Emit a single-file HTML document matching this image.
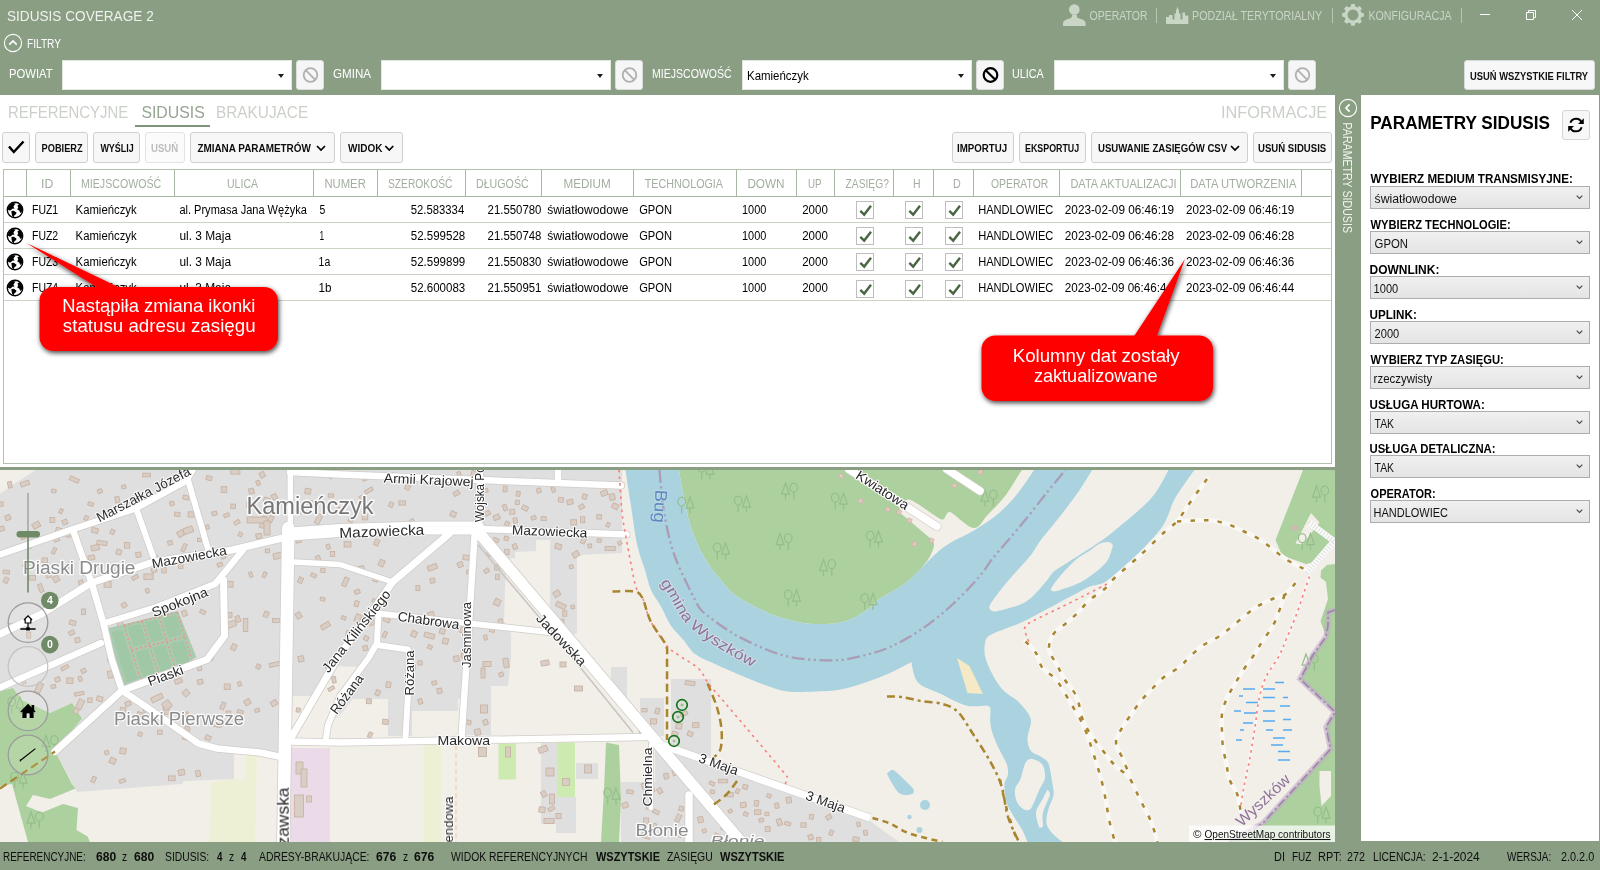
<!DOCTYPE html>
<html lang="pl">
<head>
<meta charset="utf-8">
<title>SIDUSIS COVERAGE 2</title>
<style>
*{box-sizing:border-box;margin:0;padding:0}
html,body{width:1600px;height:870px;overflow:hidden;background:#fff}
body{font-family:"Liberation Sans",sans-serif;font-size:12px;color:#000;position:relative}
.abs{position:absolute}
.t{position:absolute;white-space:nowrap;line-height:1;transform-origin:0 50%}
.g{background:#8a9e84}
.combo{position:absolute;top:60px;height:30px;width:230px;background:#fff;border:1px solid #e3e8e1}
.combo i{position:absolute;right:7.5px;top:12.6px;width:0;height:0;border-left:3.7px solid transparent;border-right:3.7px solid transparent;border-top:4.3px solid #1e1e1e}
.fbtn{position:absolute;top:60px;height:30px;width:28px;background:#f6f6f6;border:1px solid #dcdcdc;border-radius:3px}
.btn{position:absolute;top:132px;height:31px;background:#f7f7f7;border:1px solid #cfcfcf;border-radius:3px}
.sel{position:absolute;left:1370px;width:220px;height:23px;border:1px solid #adadad;background:linear-gradient(#f0f0f0,#e4e4e4)}
.sel svg{position:absolute;right:6px;top:8px}
.hl{position:absolute;left:4px;width:1327px;height:1px;background:#c9d3c6}
.vl{position:absolute;top:170px;width:1px;height:26px;background:#a9b8a4}
.cb{position:absolute;width:18px;height:18px;border:1px solid #bdbdbd;background:#fff}
.cb svg{position:absolute;left:2px;top:3px}
</style>
</head>
<body>
<!-- green frame -->
<div class="abs g" style="left:0;top:0;width:1600px;height:95px"></div>
<div class="abs g" style="left:0;top:841px;width:1600px;height:29px"></div>
<div class="abs g" style="left:1335px;top:95px;width:26px;height:747px"></div>
<div class="abs g" style="left:0;top:467px;width:1335px;height:4px"></div>
<div class="abs g" style="left:1599px;top:95px;width:1px;height:747px"></div>

<!-- title bar icons -->
<svg class="abs" style="left:1060px;top:0" width="540" height="32" viewBox="1060 0 540 32">
<g fill="#c9d5c5">
<circle cx="1074.3" cy="9.6" r="5.3"/>
<path d="M1063,26 V23.5 Q1063,20.5 1066.5,19.5 L1071,18 Q1072,17.5 1072,15 H1076.8 Q1076.8,17.5 1077.8,18 L1082.2,19.5 Q1085.6,20.5 1085.6,23.5 V26 Z"/>
<path d="M1166,24 V17 H1169 V15 H1172.5 V19.5 H1174.5 V13.5 H1176 V11 L1177.5,6.5 L1179,11 V13.5 H1180.5 V19.5 H1182.5 V12.5 H1185 V15.5 H1188.3 V24 Z"/>
<path fill-rule="evenodd" d="M1351.3,4 h3.4 l.6,2.6 1.9,.8 2.3,-1.4 2.4,2.4 -1.4,2.3 .8,1.9 2.6,.6 v3.4 l-2.6,.6 -.8,1.9 1.4,2.3 -2.4,2.4 -2.3,-1.4 -1.9,.8 -.6,2.6 h-3.4 l-.6,-2.6 -1.9,-.8 -2.3,1.4 -2.4,-2.4 1.4,-2.3 -.8,-1.9 -2.6,-.6 v-3.4 l2.6,-.6 .8,-1.9 -1.4,-2.3 2.4,-2.4 2.3,1.4 1.9,-.8 z M1353,9.6 a5.4,5.4 0 1 0 .01,0 z"/>
</g>
<g stroke="#b7c5b2" stroke-width="1"><path d="M1156.5,8 V23 M1332.5,8 V23 M1461.5,8 V23"/></g>
<g fill="none" stroke="#fff" stroke-width="1">
<path d="M1480,14.5 H1490"/>
<path d="M1526.5,12.5 H1533.5 V19.5 H1526.5 Z M1528.5,12.5 V10.5 H1535.5 V17.5 H1533.5"/>
<path d="M1572,10 L1582,20 M1582,10 L1572,20"/>
</g>
</svg>

<!-- FILTRY expander icon -->
<svg class="abs" style="left:3px;top:33px" width="20" height="20" viewBox="0 0 20 20"><circle cx="10" cy="10" r="8.6" fill="none" stroke="#fff" stroke-width="1.1"/><path d="M6.3,11.6 L10,8 L13.7,11.6" fill="none" stroke="#fff" stroke-width="1.7"/></svg>

<!-- filter combos -->
<div class="combo" style="left:62px"><i></i></div>
<div class="combo" style="left:381px"><i></i></div>
<div class="combo" style="left:742px"><i></i></div>
<div class="combo" style="left:1054px"><i></i></div>
<div class="fbtn" style="left:296px"><svg width="26" height="28"><circle cx="13.5" cy="14" r="6.8" fill="none" stroke="#b0b0b0" stroke-width="1.8"/><path d="M8.7,9.2 L18.3,18.8" stroke="#b0b0b0" stroke-width="1.8"/></svg></div>
<div class="fbtn" style="left:615px"><svg width="26" height="28"><circle cx="13.5" cy="14" r="6.8" fill="none" stroke="#b0b0b0" stroke-width="1.8"/><path d="M8.7,9.2 L18.3,18.8" stroke="#b0b0b0" stroke-width="1.8"/></svg></div>
<div class="fbtn" style="left:976px"><svg width="26" height="28"><circle cx="13.5" cy="14" r="6.8" fill="none" stroke="#000" stroke-width="2.2"/><path d="M8.7,9.2 L18.3,18.8" stroke="#000" stroke-width="2.2"/></svg></div>
<div class="fbtn" style="left:1288px"><svg width="26" height="28"><circle cx="13.5" cy="14" r="6.8" fill="none" stroke="#b0b0b0" stroke-width="1.8"/><path d="M8.7,9.2 L18.3,18.8" stroke="#b0b0b0" stroke-width="1.8"/></svg></div>
<div class="abs" style="left:1464px;top:60px;width:131px;height:30px;background:#f7f7f7;border:1px solid #d9d9d9;border-radius:3px"></div>

<!-- tab underline -->
<div class="abs" style="left:135px;top:125px;width:75px;height:2px;background:#7f9679"></div>

<!-- toolbar buttons -->
<div class="btn" style="left:2px;width:28px"><svg width="26" height="29"><path d="M6,13.5 L10.8,19 L20.5,8.5" fill="none" stroke="#000" stroke-width="2.5"/></svg></div>
<div class="btn" style="left:35px;width:53px"></div>
<div class="btn" style="left:93px;width:47px"></div>
<div class="btn" style="left:145px;width:40px;background:#fbfbfb;border-color:#e3e3e3"></div>
<div class="btn" style="left:190px;width:145px"></div>
<div class="btn" style="left:340px;width:63px"></div>
<div class="btn" style="left:952px;width:62px"></div>
<div class="btn" style="left:1019px;width:67px"></div>
<div class="btn" style="left:1091px;width:157px"></div>
<div class="btn" style="left:1253px;width:79px"></div>
<svg class="abs" style="left:0;top:140px" width="1335" height="16"><g fill="none" stroke="#000" stroke-width="1.7"><path d="M317,6 L321,10 L325,6"/><path d="M385.3,6 L389.3,10 L393.3,6"/><path d="M1231,6 L1235,10 L1239,6"/></g></svg>

<!-- grid -->
<div class="abs" style="left:3px;top:169px;width:1329px;height:295px;border:1px solid #b4c1b0;background:#fff"></div>
<div class="hl" style="top:196px;background:#a9b8a4"></div>
<div class="hl" style="top:222px"></div><div class="hl" style="top:248px"></div><div class="hl" style="top:274px"></div><div class="hl" style="top:300px"></div>
<div class="vl" style="left:25.9px"></div><div class="vl" style="left:69.9px"></div><div class="vl" style="left:173.9px"></div><div class="vl" style="left:313.0px"></div><div class="vl" style="left:376.9px"></div><div class="vl" style="left:465.2px"></div><div class="vl" style="left:541.0px"></div><div class="vl" style="left:633.0px"></div><div class="vl" style="left:735.8px"></div><div class="vl" style="left:795.8px"></div><div class="vl" style="left:834.3px"></div><div class="vl" style="left:893.0px"></div><div class="vl" style="left:932.8px"></div><div class="vl" style="left:972.8px"></div><div class="vl" style="left:1059.1px"></div><div class="vl" style="left:1179.9px"></div><div class="vl" style="left:1301.1px"></div>
<svg class="abs" style="left:6.4px;top:200.9px" width="18" height="18" viewBox="-9 -9 18 18"><circle r="7.7" fill="#fff" stroke="#000" stroke-width="1.4"/><path d="M-6.6,-3.4 L-4.6,-5.8 L-2.2,-7 L0.8,-6.6 L-0.6,-5 L-1.6,-3.2 L-0.4,-1.6 L-2.8,-1.2 L-4,0.2 L-5.6,0.6 L-7.2,-0.6 Z M-3.6,1 L-1.2,0.8 L1.4,2.4 L1.2,4 L-0.6,5.2 L-1.2,7.2 L-2.8,6 L-3.4,3.6 Z M2.4,-4.6 L4.6,-6 L6.6,-3.4 L7.4,0 L6.4,2.6 L5.2,2.8 L4.2,0.6 L2.2,-0.6 L3.2,-2.6 Z" fill="#000"/></svg><div class="cb" style="left:856.2px;top:201.2px"><svg width="14" height="12"><path d="M1.3,5.8 L5.2,9.6 L12,0.8" fill="none" stroke="#4b6644" stroke-width="2.4"/></svg></div><div class="cb" style="left:905.2px;top:201.2px"><svg width="14" height="12"><path d="M1.3,5.8 L5.2,9.6 L12,0.8" fill="none" stroke="#4b6644" stroke-width="2.4"/></svg></div><div class="cb" style="left:945.2px;top:201.2px"><svg width="14" height="12"><path d="M1.3,5.8 L5.2,9.6 L12,0.8" fill="none" stroke="#4b6644" stroke-width="2.4"/></svg></div><svg class="abs" style="left:6.4px;top:227.0px" width="18" height="18" viewBox="-9 -9 18 18"><circle r="7.7" fill="#fff" stroke="#000" stroke-width="1.4"/><path d="M-6.6,-3.4 L-4.6,-5.8 L-2.2,-7 L0.8,-6.6 L-0.6,-5 L-1.6,-3.2 L-0.4,-1.6 L-2.8,-1.2 L-4,0.2 L-5.6,0.6 L-7.2,-0.6 Z M-3.6,1 L-1.2,0.8 L1.4,2.4 L1.2,4 L-0.6,5.2 L-1.2,7.2 L-2.8,6 L-3.4,3.6 Z M2.4,-4.6 L4.6,-6 L6.6,-3.4 L7.4,0 L6.4,2.6 L5.2,2.8 L4.2,0.6 L2.2,-0.6 L3.2,-2.6 Z" fill="#000"/></svg><div class="cb" style="left:856.2px;top:227.3px"><svg width="14" height="12"><path d="M1.3,5.8 L5.2,9.6 L12,0.8" fill="none" stroke="#4b6644" stroke-width="2.4"/></svg></div><div class="cb" style="left:905.2px;top:227.3px"><svg width="14" height="12"><path d="M1.3,5.8 L5.2,9.6 L12,0.8" fill="none" stroke="#4b6644" stroke-width="2.4"/></svg></div><div class="cb" style="left:945.2px;top:227.3px"><svg width="14" height="12"><path d="M1.3,5.8 L5.2,9.6 L12,0.8" fill="none" stroke="#4b6644" stroke-width="2.4"/></svg></div><svg class="abs" style="left:6.4px;top:253.1px" width="18" height="18" viewBox="-9 -9 18 18"><circle r="7.7" fill="#fff" stroke="#000" stroke-width="1.4"/><path d="M-6.6,-3.4 L-4.6,-5.8 L-2.2,-7 L0.8,-6.6 L-0.6,-5 L-1.6,-3.2 L-0.4,-1.6 L-2.8,-1.2 L-4,0.2 L-5.6,0.6 L-7.2,-0.6 Z M-3.6,1 L-1.2,0.8 L1.4,2.4 L1.2,4 L-0.6,5.2 L-1.2,7.2 L-2.8,6 L-3.4,3.6 Z M2.4,-4.6 L4.6,-6 L6.6,-3.4 L7.4,0 L6.4,2.6 L5.2,2.8 L4.2,0.6 L2.2,-0.6 L3.2,-2.6 Z" fill="#000"/></svg><div class="cb" style="left:856.2px;top:253.4px"><svg width="14" height="12"><path d="M1.3,5.8 L5.2,9.6 L12,0.8" fill="none" stroke="#4b6644" stroke-width="2.4"/></svg></div><div class="cb" style="left:905.2px;top:253.4px"><svg width="14" height="12"><path d="M1.3,5.8 L5.2,9.6 L12,0.8" fill="none" stroke="#4b6644" stroke-width="2.4"/></svg></div><div class="cb" style="left:945.2px;top:253.4px"><svg width="14" height="12"><path d="M1.3,5.8 L5.2,9.6 L12,0.8" fill="none" stroke="#4b6644" stroke-width="2.4"/></svg></div><svg class="abs" style="left:6.4px;top:279.2px" width="18" height="18" viewBox="-9 -9 18 18"><circle r="7.7" fill="#fff" stroke="#000" stroke-width="1.4"/><path d="M-6.6,-3.4 L-4.6,-5.8 L-2.2,-7 L0.8,-6.6 L-0.6,-5 L-1.6,-3.2 L-0.4,-1.6 L-2.8,-1.2 L-4,0.2 L-5.6,0.6 L-7.2,-0.6 Z M-3.6,1 L-1.2,0.8 L1.4,2.4 L1.2,4 L-0.6,5.2 L-1.2,7.2 L-2.8,6 L-3.4,3.6 Z M2.4,-4.6 L4.6,-6 L6.6,-3.4 L7.4,0 L6.4,2.6 L5.2,2.8 L4.2,0.6 L2.2,-0.6 L3.2,-2.6 Z" fill="#000"/></svg><div class="cb" style="left:856.2px;top:279.5px"><svg width="14" height="12"><path d="M1.3,5.8 L5.2,9.6 L12,0.8" fill="none" stroke="#4b6644" stroke-width="2.4"/></svg></div><div class="cb" style="left:905.2px;top:279.5px"><svg width="14" height="12"><path d="M1.3,5.8 L5.2,9.6 L12,0.8" fill="none" stroke="#4b6644" stroke-width="2.4"/></svg></div><div class="cb" style="left:945.2px;top:279.5px"><svg width="14" height="12"><path d="M1.3,5.8 L5.2,9.6 L12,0.8" fill="none" stroke="#4b6644" stroke-width="2.4"/></svg></div>

<!-- right panel -->
<svg class="abs" style="left:1338px;top:98px" width="20" height="20" viewBox="0 0 20 20"><circle cx="10" cy="10" r="8.6" fill="none" stroke="#fff" stroke-width="1.1"/><path d="M11.6,6.3 L8,10 L11.6,13.7" fill="none" stroke="#fff" stroke-width="1.7"/></svg>
<div class="abs" style="left:1562px;top:110px;width:28px;height:30px;background:#f7f7f7;border:1px solid #d5d5d5;border-radius:3px"></div>
<svg class="abs" style="left:1567px;top:116px" width="18" height="18" viewBox="0 0 18 18"><g fill="none" stroke="#000" stroke-width="2"><path d="M14.6,6.2 A6,6 0 0 0 3.4,6.8"/><path d="M3.4,11.8 A6,6 0 0 0 14.6,11.2"/></g><path d="M16.8,2.2 V8 H11 Z M1.2,15.8 V10 H7 Z" fill="#000"/></svg>
<div class="sel" style="top:186.0px"><svg width="7" height="5"><path d="M.7,.7 L3.5,3.5 L6.3,.7" fill="none" stroke="#444" stroke-width="1.1"/></svg></div><div class="sel" style="top:231.0px"><svg width="7" height="5"><path d="M.7,.7 L3.5,3.5 L6.3,.7" fill="none" stroke="#444" stroke-width="1.1"/></svg></div><div class="sel" style="top:276.0px"><svg width="7" height="5"><path d="M.7,.7 L3.5,3.5 L6.3,.7" fill="none" stroke="#444" stroke-width="1.1"/></svg></div><div class="sel" style="top:321.0px"><svg width="7" height="5"><path d="M.7,.7 L3.5,3.5 L6.3,.7" fill="none" stroke="#444" stroke-width="1.1"/></svg></div><div class="sel" style="top:366.0px"><svg width="7" height="5"><path d="M.7,.7 L3.5,3.5 L6.3,.7" fill="none" stroke="#444" stroke-width="1.1"/></svg></div><div class="sel" style="top:411.0px"><svg width="7" height="5"><path d="M.7,.7 L3.5,3.5 L6.3,.7" fill="none" stroke="#444" stroke-width="1.1"/></svg></div><div class="sel" style="top:455.0px"><svg width="7" height="5"><path d="M.7,.7 L3.5,3.5 L6.3,.7" fill="none" stroke="#444" stroke-width="1.1"/></svg></div><div class="sel" style="top:500.0px"><svg width="7" height="5"><path d="M.7,.7 L3.5,3.5 L6.3,.7" fill="none" stroke="#444" stroke-width="1.1"/></svg></div>

<svg class="abs" style="left:0;top:470px" width="1335" height="372" viewBox="0 470 1335 372" font-family="Liberation Sans, sans-serif">
<defs><filter id="mb" x="-10" y="460" width="1355" height="392" filterUnits="userSpaceOnUse"><feGaussianBlur stdDeviation="0.45"/></filter></defs>
<g filter="url(#mb)">
<rect x="-10" y="460" width="1355" height="392" fill="#f2efe9"/>
<!-- residential grey -->
<g fill="#e0dfdf">
<path d="M36,470 L622,470 L622,553 L577,555 L577,634 L550,634 L550,540 L536,540 L536,551 L515,552 L515,558 L506,559 L504,621 L511,634 L511,658 L508,686 L491,686 L491,735 L466,735 L466,699 L458,699 L458,711 L412,711 L412,736 L388,736 L388,699 L353,699 L340,715 L300,742 L291,742 L291,757 L247,751 L234,752 L234,779 L184,781 L182,784 L77,792 L75,788 L55,751 L82,718 L72,703 L50,713 L22,700 L13,688 L0,691 L0,494 L14,484 Z"/>
<rect x="611" y="667" width="16" height="32"/>
<rect x="640" y="698" width="24" height="38"/>
<rect x="671" y="679" width="40" height="77"/>
<rect x="541" y="743" width="16" height="81"/>
<rect x="556" y="797" width="20" height="36"/>
<rect x="576" y="763" width="22" height="16"/>
<path d="M621,782 L655,782 L655,745 L680,752 L870,821 L899,842 L621,842 Z"/>
</g>
<path d="M333,666 L362,667 L340,696.5 L328,725 L326,738 L291,738 L291,696 L315,696 Z" fill="#f2efe9"/>
<!-- farmland / industrial / garden -->
<path d="M211,782 L234,779.5 L246,779.5 L246,753.5 L257,755 L255,842 L210,842 Z" fill="#eef0d5"/>
<rect x="424" y="745" width="17" height="97" fill="#eef0d5"/>
<rect x="290.5" y="748" width="39.5" height="94" fill="#ebdbe8"/>
<rect x="498.5" y="743.5" width="17.5" height="36" fill="#cdebb0"/>
<rect x="557" y="742.5" width="18" height="54.5" fill="#cdebb0"/>
<!-- forests -->
<g fill="#add19e">
<path d="M0,691 L13,688 L22,700 L50,713 L72,703 L82,718.5 L55,751 L72,784 L75.5,788.5 L50,799 L33,795 L26,806 L42,812.5 L63,804 L78,808 L76.5,830 L87.5,836.5 L90,842 L28,842 L12,784 L0,786 Z"/>
<path d="M679.0,470.0 L1021.5,470.0 C1021.5,470.0 1011.1,488.1 1005.5,495.5 C999.9,502.9 993.3,509.1 988.0,514.5 C982.7,519.9 979.8,528.4 973.5,528.0 C967.2,527.6 954.4,513.2 950.0,512.0 C945.6,510.8 945.8,520.8 941.5,519.5 C937.2,518.2 915.3,500.6 909.0,499.5 C902.7,498.4 899.0,512.0 899.0,512.0 C899.0,512.0 927.5,535.6 930.0,538.0 C932.5,540.4 934.4,542.1 934.0,545.5 C933.6,548.9 931.1,555.2 927.5,560.5 C923.9,565.8 916.0,573.5 912.5,577.0 C909.0,580.5 907.1,582.2 903.0,585.0 C898.9,587.8 881.0,597.9 878.0,600.0 C875.0,602.1 874.4,604.3 871.5,606.5 C868.6,608.7 861.7,613.8 856.5,616.5 C851.3,619.2 846.3,621.2 840.5,622.5 C834.7,623.8 827.8,623.9 821.5,624.0 C815.2,624.1 810.3,624.2 803.0,623.0 C795.7,621.8 784.7,618.8 777.5,616.5 C770.3,614.2 765.8,611.8 760.0,609.0 C754.2,606.2 747.5,603.1 742.5,600.0 C737.5,596.9 734.3,595.1 730.0,590.5 C725.7,585.9 714.7,573.5 708.5,564.0 C702.3,554.5 697.0,544.0 693.0,533.5 C689.0,523.0 686.8,511.6 684.5,501.0 C682.2,490.4 679.0,470.0 679.0,470.0 Z"/>
<path d="M1000,470 L1022,470 L1000,498.5 Z"/>
<path d="M1303,470 L1335,470 L1335,542 L1315,562 L1306,564 L1282,555.5 L1275.5,540 Z"/>
<path d="M1321,570.5 L1327,565 L1335,564 L1335,842 L1229.5,842 L1262.5,823.5 L1330,749 L1326,727 L1335,712 L1300,679 L1313,655 L1326,636.5 L1320.5,621 L1328,599 L1326,582 L1320.5,577.5 Z"/>
<path d="M606,742.5 L619,745 L621,800 L619,842 L601,842 L604,790 Z"/>
</g>
<path d="M1311,513 L1295.5,543.5 L1302.5,544.5 L1319.5,522.5 Z" fill="#f2efe9"/>
<path d="M1319.5,771 L1331,771 L1331,796 L1321.5,806 L1319.5,786 Z" fill="#f2efe9"/>
<!-- water -->
<g fill="#aad3df">
<path d="M625.5,470.0 C625.5,470.0 628.6,490.2 630.5,502.5 C632.4,514.8 634.6,532.7 637.0,544.0 C639.4,555.3 643.3,564.1 645.5,571.5 C647.7,578.9 648.4,584.2 651.0,590.0 C653.6,595.8 657.8,600.7 661.0,606.5 C664.2,612.3 666.8,619.5 670.5,625.0 C674.2,630.5 678.9,634.7 683.0,639.5 C687.1,644.3 689.7,649.9 695.0,654.0 C700.3,658.1 707.5,660.5 715.0,664.0 C722.5,667.5 731.7,671.5 740.0,675.0 C748.3,678.5 757.1,682.2 765.0,685.0 C772.9,687.8 779.1,690.4 787.5,691.5 C795.9,692.6 806.7,691.8 815.5,691.5 C824.3,691.2 832.2,691.0 840.5,689.5 C848.8,688.0 857.2,685.2 865.5,682.5 C873.8,679.8 882.3,676.4 890.0,673.0 C897.7,669.6 911.5,662.0 911.5,662.0 C911.5,662.0 913.2,677.2 918.0,682.5 C922.8,687.8 932.0,689.7 940.0,693.5 C948.0,697.3 958.2,703.5 966.0,705.5 C973.8,707.5 985.0,705.2 987.0,705.5 C989.0,705.8 990.2,707.1 990.5,709.0 C990.8,710.9 989.6,719.4 990.5,725.0 C991.4,730.6 993.3,736.1 996.0,742.5 C998.7,748.9 1005.0,759.5 1006.5,763.5 C1008.0,767.5 1008.3,770.5 1008.0,774.0 C1007.7,777.5 1004.7,780.1 1004.5,784.5 C1004.3,788.9 1005.0,796.8 1006.5,802.0 C1008.0,807.2 1010.9,811.4 1013.5,816.0 C1016.1,820.6 1019.7,825.2 1022.0,829.5 C1024.3,833.8 1027.5,842.0 1027.5,842.0 L1062.5,842.0 C1062.5,842.0 1054.7,836.2 1052.0,833.0 C1049.3,829.8 1047.1,827.0 1046.5,823.0 C1045.9,819.0 1047.3,813.7 1048.5,809.0 C1049.7,804.3 1052.9,799.7 1053.5,795.0 C1054.1,790.3 1052.8,786.2 1052.0,781.0 C1051.2,775.8 1050.0,767.0 1048.5,763.5 C1047.0,760.0 1044.4,759.1 1041.5,757.0 C1038.6,754.9 1033.3,754.0 1031.0,751.0 C1028.7,748.0 1027.5,743.9 1027.5,739.0 C1027.5,734.1 1031.0,725.4 1031.0,721.5 C1031.0,717.6 1029.6,715.7 1027.5,712.5 C1025.4,709.3 1021.1,704.2 1017.0,700.5 C1012.9,696.8 1007.1,694.3 1003.0,690.0 C998.9,685.7 995.5,680.2 992.5,674.5 C989.5,668.8 986.1,661.8 985.0,656.0 C983.9,650.2 984.4,643.3 986.0,639.5 C987.6,635.7 990.6,634.9 994.5,633.0 C998.4,631.1 1013.5,626.4 1025.5,620.5 C1037.5,614.6 1080.9,590.7 1087.5,587.5 C1094.1,584.3 1098.8,585.9 1105.0,582.0 C1111.2,578.1 1122.0,569.2 1131.5,560.0 C1141.0,550.8 1154.8,537.2 1162.0,527.0 C1169.2,516.8 1169.6,508.0 1175.0,498.5 C1180.4,489.0 1194.5,470.0 1194.5,470.0 L1168.5,470.0 C1168.5,470.0 1159.9,488.5 1151.0,498.5 C1142.1,508.5 1121.1,525.2 1113.5,531.5 C1105.9,537.8 1101.7,540.5 1093.5,546.0 C1085.3,551.5 1058.8,567.8 1054.5,571.0 C1050.2,574.2 1049.7,577.6 1046.0,581.5 C1042.3,585.4 1034.1,597.0 1025.5,602.0 C1016.9,607.0 997.5,611.2 994.5,611.5 C991.5,611.8 988.6,608.8 989.5,606.0 C990.4,603.2 999.2,591.9 1002.5,587.5 C1005.8,583.1 1007.9,581.2 1011.5,577.0 C1015.1,572.8 1026.0,561.1 1030.5,555.5 C1035.0,549.9 1036.2,546.3 1040.5,540.5 C1044.8,534.7 1054.9,523.0 1061.5,514.5 C1068.1,506.0 1074.9,496.9 1080.0,489.5 C1085.1,482.1 1092.0,470.0 1092.0,470.0 L1034.0,470.0 C1034.0,470.0 1023.8,485.8 1018.0,493.0 C1012.2,500.2 1006.3,506.8 999.0,513.0 C991.7,519.2 982.2,525.5 974.0,530.5 C965.8,535.5 956.4,539.0 950.0,543.0 C943.6,547.0 940.6,549.4 935.0,554.5 C929.4,559.6 916.1,573.6 912.5,577.0 C908.9,580.4 907.1,582.2 903.0,585.0 C898.9,587.8 881.0,597.9 878.0,600.0 C875.0,602.1 874.4,604.3 871.5,606.5 C868.6,608.7 861.7,613.8 856.5,616.5 C851.3,619.2 846.3,621.2 840.5,622.5 C834.7,623.8 827.8,623.9 821.5,624.0 C815.2,624.1 810.3,624.2 803.0,623.0 C795.7,621.8 784.7,618.8 777.5,616.5 C770.3,614.2 765.8,611.8 760.0,609.0 C754.2,606.2 747.5,603.1 742.5,600.0 C737.5,596.9 734.3,595.1 730.0,590.5 C725.7,585.9 714.7,573.5 708.5,564.0 C702.3,554.5 697.0,544.0 693.0,533.5 C689.0,523.0 686.8,511.6 684.5,501.0 C682.2,490.4 679.0,470.0 679.0,470.0 L625.5,470.0 Z"/>
<path d="M887.0,774.0 C887.0,774.0 890.8,768.5 893.5,770.0 C896.2,771.5 911.6,786.7 913.0,788.5 C914.4,790.3 914.1,793.3 912.0,794.0 C909.9,794.7 903.1,796.3 899.0,793.0 C894.9,789.7 887.0,774.0 887.0,774.0 Z"/>
<circle cx="925" cy="805" r="5"/><circle cx="909.5" cy="817" r="2.2"/><circle cx="919.5" cy="830" r="3"/>
</g>
<path d="M1050.5,589.5 C1050.5,589.5 1054.9,582.3 1058.5,578.0 C1062.1,573.7 1069.8,565.1 1075.0,560.5 C1080.2,555.9 1086.3,553.0 1090.0,550.5 C1093.7,548.0 1096.1,545.4 1099.0,544.0 C1101.9,542.6 1105.3,541.9 1107.5,542.0 C1109.7,542.1 1111.8,543.1 1112.5,544.5 C1113.2,545.9 1112.2,548.2 1111.5,550.5 C1110.8,552.8 1109.4,557.5 1107.5,560.5 C1105.6,563.5 1103.1,565.8 1100.0,568.5 C1096.9,571.2 1092.5,574.6 1089.0,577.0 C1085.5,579.4 1082.8,581.2 1079.0,583.0 C1075.2,584.8 1070.1,586.6 1066.0,588.0 C1061.9,589.4 1056.3,591.3 1054.5,591.5 C1052.7,591.7 1050.5,589.5 1050.5,589.5 Z" fill="#f2efe9"/>
<path d="M1027.5,760.0 C1031.0,757.4 1038.6,760.6 1041.5,763.5 C1044.4,766.4 1045.3,773.2 1045.0,777.5 C1044.7,781.8 1041.7,784.7 1039.5,789.5 C1037.3,794.3 1032.7,806.3 1031.0,808.5 C1029.3,810.7 1026.3,810.6 1024.0,809.5 C1021.7,808.4 1018.5,805.3 1017.0,802.0 C1015.5,798.7 1014.4,793.3 1015.0,789.5 C1015.6,785.7 1018.7,783.4 1020.5,779.0 C1022.3,774.6 1024.0,762.6 1027.5,760.0 Z" fill="#f2efe9"/>
<path d="M1047.5,789.5 C1047.5,789.5 1050.5,792.6 1050.0,795.0 C1049.5,797.4 1044.2,807.3 1043.0,812.5 C1041.8,817.7 1043.4,824.4 1043.0,826.0 C1042.6,827.6 1039.5,828.0 1039.5,828.0 C1039.5,828.0 1035.4,817.4 1036.0,812.5 C1036.6,807.6 1041.2,802.1 1043.0,798.5 C1044.8,794.9 1047.5,789.5 1047.5,789.5 Z" fill="#f2efe9"/>
<path d="M957,658 L969.5,666 L983,694 L967.5,693 Z" fill="#f5e9c6"/>
<g fill="#d9cec5" stroke="#c9b4a5" stroke-width=".9">
<rect x="-2.7" y="-1.7" width="5.5" height="3.4" transform="translate(90.7,504.0) rotate(15)"/>
<rect x="-2.1" y="-1.7" width="4.1" height="3.4" transform="translate(163.2,670.2) rotate(0)"/>
<rect x="-3.0" y="-1.8" width="6.0" height="3.5" transform="translate(25.4,564.0) rotate(-65)"/>
<rect x="-2.6" y="-1.7" width="5.3" height="3.3" transform="translate(163.2,484.5) rotate(70)"/>
<rect x="-2.0" y="-1.8" width="3.9" height="3.5" transform="translate(240.4,534.4) rotate(-65)"/>
<rect x="-2.7" y="-2.1" width="5.4" height="4.2" transform="translate(50.6,598.4) rotate(-12)"/>
<rect x="-2.5" y="-2.3" width="5.0" height="4.7" transform="translate(158.0,606.6) rotate(-30)"/>
<rect x="-2.2" y="-2.7" width="4.4" height="5.4" transform="translate(164.0,570.2) rotate(0)"/>
<rect x="-2.5" y="-2.1" width="5.0" height="4.2" transform="translate(22.9,536.8) rotate(80)"/>
<rect x="-2.4" y="-2.7" width="4.8" height="5.3" transform="translate(274.4,496.9) rotate(-30)"/>
<rect x="-1.9" y="-2.4" width="3.7" height="4.8" transform="translate(118.1,681.7) rotate(15)"/>
<rect x="-4.0" y="-2.7" width="8.0" height="5.4" transform="translate(95.2,547.7) rotate(-12)"/>
<rect x="-2.7" y="-1.7" width="5.5" height="3.4" transform="translate(264.5,574.8) rotate(-65)"/>
<rect x="-2.4" y="-2.6" width="4.8" height="5.2" transform="translate(161.8,620.2) rotate(15)"/>
<rect x="-3.2" y="-1.8" width="6.4" height="3.5" transform="translate(6.3,572.1) rotate(8)"/>
<rect x="-3.7" y="-2.8" width="7.5" height="5.6" transform="translate(36.2,525.2) rotate(-30)"/>
<rect x="-2.0" y="-2.2" width="3.9" height="4.4" transform="translate(112.5,531.8) rotate(25)"/>
<rect x="-3.7" y="-1.9" width="7.4" height="3.8" transform="translate(276.2,620.5) rotate(0)"/>
<rect x="-2.5" y="-2.4" width="5.0" height="4.8" transform="translate(64.9,522.1) rotate(-20)"/>
<rect x="-4.3" y="-2.0" width="8.5" height="4.1" transform="translate(40.8,588.1) rotate(70)"/>
<rect x="-2.9" y="-2.2" width="5.7" height="4.5" transform="translate(266.1,614.4) rotate(-65)"/>
<rect x="-2.3" y="-1.7" width="4.7" height="3.5" transform="translate(223.4,556.9) rotate(-20)"/>
<rect x="-2.4" y="-1.8" width="4.8" height="3.5" transform="translate(53.4,686.6) rotate(-12)"/>
<rect x="-3.0" y="-2.1" width="6.1" height="4.2" transform="translate(0.1,504.1) rotate(0)"/>
<rect x="-2.1" y="-2.1" width="4.3" height="4.2" transform="translate(171.9,503.5) rotate(-12)"/>
<rect x="-3.2" y="-2.3" width="6.4" height="4.5" transform="translate(32.3,577.9) rotate(0)"/>
<rect x="-2.1" y="-2.8" width="4.3" height="5.5" transform="translate(28.6,546.0) rotate(-20)"/>
<rect x="-2.3" y="-2.6" width="4.6" height="5.1" transform="translate(57.5,679.5) rotate(70)"/>
<rect x="-1.9" y="-2.8" width="3.8" height="5.6" transform="translate(83.5,611.8) rotate(0)"/>
<rect x="-2.6" y="-2.3" width="5.1" height="4.6" transform="translate(99.6,519.8) rotate(80)"/>
<rect x="-3.0" y="-2.7" width="6.1" height="5.5" transform="translate(227.2,686.7) rotate(0)"/>
<rect x="-2.8" y="-3.0" width="5.7" height="6.0" transform="translate(56.0,578.9) rotate(-30)"/>
<rect x="-3.2" y="-2.2" width="6.4" height="4.5" transform="translate(72.6,622.7) rotate(15)"/>
<rect x="-2.1" y="-1.9" width="4.2" height="3.8" transform="translate(267.4,550.9) rotate(0)"/>
<rect x="-2.7" y="-1.6" width="5.3" height="3.2" transform="translate(135.1,686.8) rotate(15)"/>
<rect x="-2.7" y="-2.9" width="5.5" height="5.7" transform="translate(223.9,489.6) rotate(0)"/>
<rect x="-2.9" y="-2.1" width="5.9" height="4.1" transform="translate(133.8,510.1) rotate(25)"/>
<rect x="-1.9" y="-1.8" width="3.8" height="3.6" transform="translate(129.7,633.8) rotate(-20)"/>
<rect x="-3.0" y="-1.8" width="5.9" height="3.6" transform="translate(42.3,669.2) rotate(-30)"/>
<rect x="-4.1" y="-1.8" width="8.2" height="3.6" transform="translate(184.0,547.7) rotate(-65)"/>
<rect x="-2.0" y="-3.0" width="3.9" height="6.0" transform="translate(28.8,635.1) rotate(0)"/>
<rect x="-2.5" y="-2.7" width="5.0" height="5.3" transform="translate(7.8,517.6) rotate(70)"/>
<rect x="-3.1" y="-2.1" width="6.2" height="4.2" transform="translate(117.3,499.7) rotate(80)"/>
<rect x="-4.8" y="-2.8" width="9.6" height="5.7" transform="translate(228.2,584.2) rotate(0)"/>
<rect x="-3.9" y="-1.9" width="7.7" height="3.7" transform="translate(146.6,475.1) rotate(0)"/>
<rect x="-2.8" y="-2.4" width="5.7" height="4.8" transform="translate(48.3,574.7) rotate(70)"/>
<rect x="-4.7" y="-2.8" width="9.3" height="5.7" transform="translate(148.6,576.7) rotate(0)"/>
<rect x="-2.5" y="-2.4" width="5.0" height="4.8" transform="translate(77.5,640.1) rotate(-12)"/>
<rect x="-2.5" y="-2.3" width="5.0" height="4.6" transform="translate(124.1,605.1) rotate(-30)"/>
<rect x="-2.5" y="-1.9" width="5.0" height="3.9" transform="translate(142.3,647.8) rotate(8)"/>
<rect x="-2.1" y="-2.2" width="4.1" height="4.5" transform="translate(258.4,666.5) rotate(25)"/>
<rect x="-2.1" y="-1.7" width="4.2" height="3.4" transform="translate(123.8,486.9) rotate(-12)"/>
<rect x="-4.5" y="-2.5" width="9.0" height="5.0" transform="translate(251.2,504.8) rotate(0)"/>
<rect x="-3.2" y="-2.2" width="6.4" height="4.3" transform="translate(270.9,519.1) rotate(-65)"/>
<rect x="-2.4" y="-2.3" width="4.8" height="4.6" transform="translate(233.1,506.4) rotate(0)"/>
<rect x="-2.3" y="-2.1" width="4.6" height="4.1" transform="translate(99.9,491.2) rotate(-20)"/>
<rect x="-3.5" y="-2.9" width="7.0" height="5.9" transform="translate(107.6,584.3) rotate(0)"/>
<rect x="-4.7" y="-2.0" width="9.3" height="4.0" transform="translate(74.4,479.7) rotate(25)"/>
<rect x="-3.2" y="-2.2" width="6.3" height="4.3" transform="translate(237.9,619.0) rotate(70)"/>
<rect x="-4.5" y="-2.2" width="8.9" height="4.4" transform="translate(25.0,483.6) rotate(-20)"/>
<rect x="-3.0" y="-2.8" width="6.0" height="5.6" transform="translate(177.6,646.6) rotate(-12)"/>
<rect x="-2.6" y="-2.9" width="5.2" height="5.8" transform="translate(127.1,545.3) rotate(0)"/>
<rect x="-3.2" y="-3.0" width="6.3" height="5.9" transform="translate(12.1,626.4) rotate(0)"/>
<rect x="-2.2" y="-2.7" width="4.4" height="5.3" transform="translate(56.5,539.3) rotate(70)"/>
<rect x="-4.7" y="-3.0" width="9.5" height="6.0" transform="translate(188.2,530.2) rotate(-20)"/>
<rect x="-2.0" y="-2.3" width="4.1" height="4.5" transform="translate(205.3,591.7) rotate(-12)"/>
<rect x="-2.7" y="-2.4" width="5.5" height="4.7" transform="translate(184.3,613.4) rotate(70)"/>
<rect x="-2.1" y="-1.9" width="4.2" height="3.8" transform="translate(86.2,518.1) rotate(-65)"/>
<rect x="-5.2" y="-2.8" width="10.3" height="5.5" transform="translate(39.1,687.7) rotate(-65)"/>
<rect x="-2.0" y="-1.7" width="4.0" height="3.4" transform="translate(207.4,527.0) rotate(70)"/>
<rect x="-2.4" y="-1.8" width="4.9" height="3.6" transform="translate(67.8,535.2) rotate(8)"/>
<rect x="-5.2" y="-2.1" width="10.3" height="4.1" transform="translate(102.0,543.0) rotate(8)"/>
<rect x="-2.3" y="-1.7" width="4.5" height="3.4" transform="translate(61.0,511.1) rotate(-65)"/>
<rect x="-3.0" y="-2.2" width="6.0" height="4.3" transform="translate(1.4,528.9) rotate(-20)"/>
<rect x="-3.0" y="-1.8" width="6.1" height="3.6" transform="translate(23.7,680.7) rotate(80)"/>
<rect x="-1.8" y="-2.8" width="3.6" height="5.5" transform="translate(202.8,611.9) rotate(-65)"/>
<rect x="-2.5" y="-2.9" width="5.0" height="5.7" transform="translate(120.2,624.5) rotate(80)"/>
<rect x="-3.0" y="-2.4" width="6.0" height="4.8" transform="translate(233.8,647.2) rotate(-65)"/>
<rect x="-3.7" y="-2.2" width="7.4" height="4.5" transform="translate(178.4,681.1) rotate(-20)"/>
<rect x="-2.5" y="-1.6" width="5.0" height="3.2" transform="translate(175.3,620.1) rotate(70)"/>
<rect x="-2.5" y="-2.6" width="5.1" height="5.3" transform="translate(251.4,491.1) rotate(-12)"/>
<rect x="-2.9" y="-1.9" width="5.8" height="3.8" transform="translate(236.9,522.4) rotate(-30)"/>
<rect x="-2.5" y="-2.6" width="4.9" height="5.1" transform="translate(138.3,554.8) rotate(80)"/>
<rect x="-2.6" y="-2.1" width="5.3" height="4.1" transform="translate(177.2,514.4) rotate(8)"/>
<rect x="-3.2" y="-1.7" width="6.4" height="3.5" transform="translate(135.1,577.4) rotate(-30)"/>
<rect x="-3.9" y="-2.3" width="7.8" height="4.5" transform="translate(81.4,584.1) rotate(70)"/>
<rect x="-2.4" y="-2.7" width="4.9" height="5.5" transform="translate(262.2,474.8) rotate(-30)"/>
<rect x="-5.0" y="-2.9" width="10.0" height="5.8" transform="translate(278.3,555.7) rotate(-12)"/>
<rect x="-3.0" y="-2.3" width="6.0" height="4.6" transform="translate(266.8,500.0) rotate(15)"/>
<rect x="-4.0" y="-1.6" width="7.9" height="3.3" transform="translate(64.8,667.6) rotate(-30)"/>
<rect x="-2.8" y="-2.2" width="5.7" height="4.4" transform="translate(190.8,559.8) rotate(-12)"/>
<rect x="-4.6" y="-2.8" width="9.2" height="5.5" transform="translate(235.3,471.4) rotate(0)"/>
<rect x="-2.2" y="-2.1" width="4.4" height="4.2" transform="translate(199.6,668.4) rotate(80)"/>
<rect x="-2.2" y="-1.7" width="4.3" height="3.3" transform="translate(211.6,658.1) rotate(-65)"/>
<rect x="-2.1" y="-2.3" width="4.3" height="4.6" transform="translate(262.0,525.6) rotate(15)"/>
<rect x="-1.8" y="-2.7" width="3.6" height="5.3" transform="translate(219.8,564.7) rotate(70)"/>
<rect x="-1.8" y="-2.6" width="3.6" height="5.3" transform="translate(153.8,628.6) rotate(0)"/>
<rect x="-2.9" y="-2.9" width="5.8" height="5.8" transform="translate(180.5,533.7) rotate(-30)"/>
<rect x="-2.7" y="-2.2" width="5.5" height="4.3" transform="translate(71.6,632.8) rotate(-30)"/>
<rect x="-2.0" y="-1.8" width="4.0" height="3.7" transform="translate(156.1,557.4) rotate(-30)"/>
<rect x="-2.2" y="-2.7" width="4.5" height="5.3" transform="translate(154.1,570.2) rotate(70)"/>
<rect x="-2.3" y="-1.7" width="4.5" height="3.5" transform="translate(53.9,490.9) rotate(8)"/>
<rect x="-1.8" y="-2.8" width="3.6" height="5.6" transform="translate(226.6,515.3) rotate(70)"/>
<rect x="-2.9" y="-2.3" width="5.8" height="4.6" transform="translate(58.8,530.2) rotate(15)"/>
<rect x="-2.1" y="-2.0" width="4.1" height="4.0" transform="translate(176.3,660.0) rotate(25)"/>
<rect x="-2.2" y="-2.7" width="4.4" height="5.5" transform="translate(180.8,565.6) rotate(0)"/>
<rect x="-2.6" y="-1.6" width="5.3" height="3.2" transform="translate(250.8,574.6) rotate(70)"/>
<rect x="-2.1" y="-1.8" width="4.2" height="3.5" transform="translate(239.5,683.9) rotate(70)"/>
<rect x="-4.8" y="-2.9" width="9.7" height="5.7" transform="translate(231.1,624.5) rotate(-20)"/>
<rect x="-2.7" y="-2.3" width="5.4" height="4.7" transform="translate(200.2,681.8) rotate(-12)"/>
<rect x="-3.4" y="-2.7" width="6.9" height="5.4" transform="translate(264.2,513.0) rotate(70)"/>
<rect x="-3.2" y="-2.5" width="6.4" height="5.0" transform="translate(84.4,571.9) rotate(-30)"/>
<rect x="-1.8" y="-2.2" width="3.6" height="4.4" transform="translate(147.4,590.8) rotate(-20)"/>
<rect x="-2.8" y="-2.2" width="5.5" height="4.4" transform="translate(6.1,580.1) rotate(-65)"/>
<rect x="-2.5" y="-2.6" width="5.0" height="5.1" transform="translate(118.8,552.1) rotate(15)"/>
<rect x="-2.9" y="-2.6" width="5.9" height="5.3" transform="translate(191.1,514.4) rotate(0)"/>
<rect x="-2.4" y="-2.0" width="4.9" height="3.9" transform="translate(214.4,513.5) rotate(-12)"/>
<rect x="-2.4" y="-2.5" width="4.8" height="5.1" transform="translate(52.4,519.9) rotate(0)"/>
<rect x="-1.8" y="-2.4" width="3.6" height="4.9" transform="translate(258.1,482.9) rotate(-20)"/>
<rect x="-1.9" y="-1.7" width="3.8" height="3.4" transform="translate(199.4,539.8) rotate(0)"/>
<rect x="-2.7" y="-2.1" width="5.5" height="4.3" transform="translate(209.0,478.0) rotate(15)"/>
<rect x="-2.6" y="-2.7" width="5.2" height="5.3" transform="translate(117.7,664.9) rotate(8)"/>
<rect x="-1.8" y="-2.3" width="3.6" height="4.5" transform="translate(230.2,565.7) rotate(-30)"/>
<rect x="-3.1" y="-1.6" width="6.2" height="3.3" transform="translate(54.0,550.8) rotate(-65)"/>
<rect x="-3.1" y="-2.0" width="6.3" height="3.9" transform="translate(9.8,484.7) rotate(80)"/>
<rect x="-3.2" y="-2.5" width="6.4" height="4.9" transform="translate(94.9,530.6) rotate(15)"/>
<rect x="-2.8" y="-2.4" width="5.7" height="4.9" transform="translate(258.8,536.1) rotate(-12)"/>
<rect x="-2.5" y="-2.9" width="5.0" height="5.8" transform="translate(70.3,565.2) rotate(8)"/>
<rect x="-2.2" y="-2.1" width="4.5" height="4.2" transform="translate(170.0,542.8) rotate(-12)"/>
<rect x="-2.7" y="-2.3" width="5.4" height="4.5" transform="translate(44.8,560.3) rotate(0)"/>
<rect x="-5.2" y="-2.0" width="10.3" height="3.9" transform="translate(274.5,664.5) rotate(-12)"/>
<rect x="-1.9" y="-2.2" width="3.9" height="4.5" transform="translate(272.2,508.9) rotate(0)"/>
<rect x="-3.0" y="-2.0" width="6.0" height="4.0" transform="translate(186.0,497.5) rotate(15)"/>
<rect x="-2.1" y="-2.0" width="4.2" height="4.0" transform="translate(123.0,511.7) rotate(0)"/>
<rect x="-3.2" y="-2.3" width="6.5" height="4.6" transform="translate(91.4,557.7) rotate(-12)"/>
<rect x="-1.9" y="-2.3" width="3.8" height="4.5" transform="translate(412.3,521.5) rotate(-30)"/>
<rect x="-2.2" y="-1.8" width="4.4" height="3.5" transform="translate(458.8,474.0) rotate(80)"/>
<rect x="-2.5" y="-1.8" width="5.0" height="3.7" transform="translate(330.6,475.8) rotate(-65)"/>
<rect x="-3.3" y="-2.1" width="6.6" height="4.2" transform="translate(402.1,503.0) rotate(0)"/>
<rect x="-2.8" y="-2.9" width="5.7" height="5.8" transform="translate(474.0,473.9) rotate(15)"/>
<rect x="-4.3" y="-1.7" width="8.6" height="3.4" transform="translate(368.8,490.6) rotate(-30)"/>
<rect x="-1.9" y="-2.2" width="3.8" height="4.3" transform="translate(393.6,475.2) rotate(-65)"/>
<rect x="-2.3" y="-2.0" width="4.7" height="4.0" transform="translate(391.1,504.7) rotate(-65)"/>
<rect x="-2.2" y="-2.4" width="4.4" height="4.8" transform="translate(350.8,519.7) rotate(25)"/>
<rect x="-3.0" y="-2.5" width="5.9" height="5.0" transform="translate(299.2,510.3) rotate(25)"/>
<rect x="-3.0" y="-2.2" width="6.0" height="4.3" transform="translate(456.5,493.2) rotate(-30)"/>
<rect x="-1.8" y="-1.8" width="3.7" height="3.6" transform="translate(433.6,478.5) rotate(25)"/>
<rect x="-3.7" y="-2.3" width="7.4" height="4.6" transform="translate(311.8,503.1) rotate(8)"/>
<rect x="-2.9" y="-2.7" width="5.8" height="5.4" transform="translate(307.9,491.2) rotate(8)"/>
<rect x="-5.1" y="-2.3" width="10.3" height="4.6" transform="translate(318.5,519.2) rotate(-65)"/>
<rect x="-2.7" y="-2.8" width="5.4" height="5.5" transform="translate(365.0,517.2) rotate(0)"/>
<rect x="-2.6" y="-1.7" width="5.2" height="3.3" transform="translate(330.9,495.6) rotate(0)"/>
<rect x="-2.1" y="-2.6" width="4.2" height="5.2" transform="translate(364.3,478.2) rotate(-20)"/>
<rect x="-2.8" y="-2.5" width="5.5" height="5.1" transform="translate(453.3,514.1) rotate(25)"/>
<rect x="-2.4" y="-2.4" width="4.8" height="4.8" transform="translate(407.6,487.3) rotate(-65)"/>
<rect x="-2.0" y="-1.6" width="4.0" height="3.2" transform="translate(361.4,497.2) rotate(-30)"/>
<rect x="-2.9" y="-2.2" width="5.8" height="4.5" transform="translate(337.9,510.2) rotate(-30)"/>
<rect x="-2.3" y="-2.1" width="4.6" height="4.2" transform="translate(538.8,490.6) rotate(70)"/>
<rect x="-2.7" y="-1.7" width="5.4" height="3.4" transform="translate(553.3,489.6) rotate(70)"/>
<rect x="-3.1" y="-2.5" width="6.2" height="5.0" transform="translate(496.6,517.3) rotate(-20)"/>
<rect x="-2.0" y="-3.0" width="4.1" height="5.9" transform="translate(582.6,519.8) rotate(0)"/>
<rect x="-2.7" y="-2.0" width="5.3" height="3.9" transform="translate(515.2,520.5) rotate(80)"/>
<rect x="-3.1" y="-1.9" width="6.3" height="3.8" transform="translate(505.0,507.6) rotate(70)"/>
<rect x="-2.0" y="-2.2" width="4.1" height="4.3" transform="translate(517.3,502.5) rotate(8)"/>
<rect x="-3.1" y="-2.4" width="6.1" height="4.8" transform="translate(570.0,502.0) rotate(-12)"/>
<rect x="-2.3" y="-2.1" width="4.6" height="4.3" transform="translate(599.1,516.8) rotate(0)"/>
<rect x="-2.4" y="-1.8" width="4.8" height="3.7" transform="translate(533.6,517.8) rotate(-20)"/>
<rect x="-2.2" y="-3.0" width="4.4" height="5.9" transform="translate(525.1,508.1) rotate(-65)"/>
<rect x="-2.2" y="-2.5" width="4.4" height="5.0" transform="translate(584.6,496.6) rotate(15)"/>
<rect x="-3.3" y="-2.5" width="6.7" height="5.0" transform="translate(604.2,493.1) rotate(-20)"/>
<rect x="-2.5" y="-2.3" width="5.1" height="4.7" transform="translate(560.9,499.8) rotate(8)"/>
<rect x="-1.9" y="-2.5" width="3.8" height="5.0" transform="translate(518.2,493.8) rotate(8)"/>
<rect x="-2.6" y="-2.1" width="5.2" height="4.2" transform="translate(487.5,513.2) rotate(-30)"/>
<rect x="-1.8" y="-1.9" width="3.6" height="3.7" transform="translate(486.1,490.4) rotate(-12)"/>
<rect x="-2.5" y="-2.5" width="5.0" height="5.0" transform="translate(512.3,511.7) rotate(0)"/>
<rect x="-2.6" y="-2.1" width="5.1" height="4.3" transform="translate(581.6,506.6) rotate(-30)"/>
<rect x="-2.1" y="-1.7" width="4.3" height="3.3" transform="translate(608.1,524.8) rotate(-65)"/>
<rect x="-2.5" y="-2.0" width="5.1" height="3.9" transform="translate(543.6,518.7) rotate(0)"/>
<rect x="-2.0" y="-2.1" width="4.1" height="4.3" transform="translate(507.0,523.7) rotate(25)"/>
<rect x="-3.0" y="-2.6" width="6.0" height="5.2" transform="translate(615.2,506.3) rotate(25)"/>
<rect x="-3.1" y="-2.7" width="6.2" height="5.4" transform="translate(612.2,497.1) rotate(80)"/>
<rect x="-1.9" y="-2.9" width="3.8" height="5.8" transform="translate(505.1,489.0) rotate(0)"/>
<rect x="-2.9" y="-2.6" width="5.8" height="5.2" transform="translate(573.7,522.3) rotate(0)"/>
<rect x="-1.8" y="-2.8" width="3.6" height="5.6" transform="translate(495.9,540.0) rotate(-65)"/>
<rect x="-4.3" y="-2.3" width="8.6" height="4.5" transform="translate(490.2,551.5) rotate(-65)"/>
<rect x="-2.1" y="-2.0" width="4.3" height="4.0" transform="translate(506.3,538.4) rotate(15)"/>
<rect x="-2.2" y="-2.6" width="4.4" height="5.3" transform="translate(514.9,546.6) rotate(-20)"/>
<rect x="-2.3" y="-2.6" width="4.5" height="5.2" transform="translate(506.9,551.9) rotate(0)"/>
<rect x="-2.6" y="-2.0" width="5.2" height="4.0" transform="translate(420.3,701.4) rotate(70)"/>
<rect x="-3.2" y="-1.6" width="6.4" height="3.2" transform="translate(331.2,688.6) rotate(-30)"/>
<rect x="-3.2" y="-2.3" width="6.4" height="4.6" transform="translate(464.3,655.5) rotate(0)"/>
<rect x="-4.5" y="-2.3" width="9.0" height="4.6" transform="translate(345.4,581.9) rotate(-65)"/>
<rect x="-5.2" y="-2.4" width="10.4" height="4.8" transform="translate(429.4,635.6) rotate(15)"/>
<rect x="-3.7" y="-2.8" width="7.5" height="5.7" transform="translate(357.9,618.2) rotate(-65)"/>
<rect x="-2.1" y="-2.9" width="4.3" height="5.7" transform="translate(300.4,580.2) rotate(25)"/>
<rect x="-2.6" y="-2.6" width="5.3" height="5.1" transform="translate(460.2,564.7) rotate(-20)"/>
<rect x="-2.0" y="-2.8" width="4.0" height="5.6" transform="translate(356.6,603.7) rotate(15)"/>
<rect x="-4.7" y="-2.4" width="9.3" height="4.8" transform="translate(325.5,625.6) rotate(-30)"/>
<rect x="-2.5" y="-2.0" width="5.0" height="3.9" transform="translate(407.8,675.8) rotate(80)"/>
<rect x="-2.1" y="-2.1" width="4.2" height="4.1" transform="translate(322.9,570.4) rotate(0)"/>
<rect x="-2.7" y="-1.9" width="5.5" height="3.7" transform="translate(469.1,572.1) rotate(0)"/>
<rect x="-2.4" y="-1.9" width="4.8" height="3.7" transform="translate(434.3,683.0) rotate(-12)"/>
<rect x="-3.0" y="-2.2" width="6.1" height="4.4" transform="translate(376.7,542.5) rotate(-65)"/>
<rect x="-3.4" y="-2.6" width="6.8" height="5.3" transform="translate(347.5,544.3) rotate(0)"/>
<rect x="-2.6" y="-2.6" width="5.2" height="5.3" transform="translate(454.0,623.9) rotate(0)"/>
<rect x="-3.1" y="-2.5" width="6.1" height="5.0" transform="translate(412.2,667.2) rotate(0)"/>
<rect x="-2.7" y="-1.7" width="5.4" height="3.5" transform="translate(375.0,601.0) rotate(25)"/>
<rect x="-2.1" y="-2.2" width="4.3" height="4.4" transform="translate(420.1,662.8) rotate(80)"/>
<rect x="-2.7" y="-2.8" width="5.5" height="5.6" transform="translate(445.4,641.1) rotate(15)"/>
<rect x="-4.0" y="-3.0" width="8.0" height="5.9" transform="translate(431.4,615.8) rotate(70)"/>
<rect x="-3.2" y="-1.9" width="6.4" height="3.8" transform="translate(333.9,679.7) rotate(80)"/>
<rect x="-2.5" y="-1.6" width="4.9" height="3.2" transform="translate(375.5,580.0) rotate(15)"/>
<rect x="-3.2" y="-1.9" width="6.3" height="3.8" transform="translate(386.8,620.0) rotate(25)"/>
<rect x="-2.8" y="-2.5" width="5.7" height="4.9" transform="translate(385.4,721.9) rotate(8)"/>
<rect x="-1.8" y="-2.2" width="3.5" height="4.4" transform="translate(343.7,617.9) rotate(-65)"/>
<rect x="-2.1" y="-2.6" width="4.2" height="5.3" transform="translate(357.3,591.7) rotate(70)"/>
<rect x="-3.2" y="-2.9" width="6.4" height="5.8" transform="translate(463.2,630.1) rotate(-65)"/>
<rect x="-4.5" y="-2.7" width="9.1" height="5.5" transform="translate(329.6,665.2) rotate(-65)"/>
<rect x="-3.0" y="-2.3" width="5.9" height="4.5" transform="translate(407.2,699.7) rotate(70)"/>
<rect x="-2.1" y="-2.6" width="4.2" height="5.2" transform="translate(377.7,692.8) rotate(25)"/>
<rect x="-3.0" y="-2.7" width="5.9" height="5.4" transform="translate(414.1,633.9) rotate(-65)"/>
<rect x="-2.4" y="-2.5" width="4.8" height="5.0" transform="translate(348.5,633.5) rotate(15)"/>
<rect x="-2.3" y="-1.7" width="4.7" height="3.4" transform="translate(322.6,599.1) rotate(15)"/>
<rect x="-4.8" y="-2.5" width="9.6" height="5.0" transform="translate(432.4,567.4) rotate(-20)"/>
<rect x="-2.2" y="-2.5" width="4.4" height="4.9" transform="translate(332.5,554.0) rotate(0)"/>
<rect x="-2.4" y="-2.3" width="4.7" height="4.7" transform="translate(432.6,580.7) rotate(80)"/>
<rect x="-3.1" y="-2.4" width="6.2" height="4.7" transform="translate(466.0,557.6) rotate(8)"/>
<rect x="-2.4" y="-2.8" width="4.8" height="5.7" transform="translate(388.4,684.7) rotate(8)"/>
<rect x="-2.5" y="-2.4" width="4.9" height="4.8" transform="translate(368.9,701.3) rotate(0)"/>
<rect x="-2.0" y="-2.4" width="4.0" height="4.9" transform="translate(417.9,588.1) rotate(0)"/>
<rect x="-2.6" y="-2.5" width="5.2" height="5.1" transform="translate(442.3,631.3) rotate(15)"/>
<rect x="-2.8" y="-1.9" width="5.5" height="3.7" transform="translate(370.1,735.0) rotate(-65)"/>
<rect x="-2.8" y="-2.9" width="5.5" height="5.8" transform="translate(301.0,658.9) rotate(-12)"/>
<rect x="-3.1" y="-1.6" width="6.2" height="3.3" transform="translate(384.8,634.5) rotate(-65)"/>
<rect x="-2.7" y="-2.1" width="5.5" height="4.2" transform="translate(318.1,558.4) rotate(70)"/>
<rect x="-2.6" y="-2.8" width="5.2" height="5.5" transform="translate(371.7,622.4) rotate(-30)"/>
<rect x="-2.2" y="-2.3" width="4.3" height="4.6" transform="translate(366.2,638.2) rotate(-65)"/>
<rect x="-3.3" y="-2.6" width="6.5" height="5.2" transform="translate(381.6,563.0) rotate(-65)"/>
<rect x="-2.4" y="-2.4" width="4.7" height="4.8" transform="translate(365.4,648.1) rotate(-12)"/>
<rect x="-2.7" y="-2.7" width="5.5" height="5.4" transform="translate(456.3,658.7) rotate(80)"/>
<rect x="-2.8" y="-2.6" width="5.5" height="5.1" transform="translate(361.4,568.7) rotate(-12)"/>
<rect x="-1.8" y="-2.7" width="3.6" height="5.4" transform="translate(313.6,575.4) rotate(-65)"/>
<rect x="-2.0" y="-2.0" width="3.9" height="4.1" transform="translate(298.3,710.0) rotate(8)"/>
<rect x="-1.8" y="-2.4" width="3.6" height="4.8" transform="translate(328.2,546.7) rotate(-20)"/>
<rect x="-2.4" y="-2.6" width="4.8" height="5.1" transform="translate(439.5,690.9) rotate(-12)"/>
<rect x="-2.6" y="-2.9" width="5.3" height="5.8" transform="translate(298.5,615.5) rotate(-30)"/>
<rect x="-1.9" y="-2.3" width="3.7" height="4.5" transform="translate(430.0,647.0) rotate(-65)"/>
<rect x="-2.8" y="-1.8" width="5.6" height="3.5" transform="translate(298.7,540.9) rotate(-12)"/>
<rect x="-2.5" y="-2.0" width="4.9" height="4.0" transform="translate(486.6,570.9) rotate(-30)"/>
<rect x="-1.8" y="-2.7" width="3.7" height="5.4" transform="translate(497.4,576.9) rotate(0)"/>
<rect x="-2.7" y="-2.6" width="5.4" height="5.2" transform="translate(497.3,567.6) rotate(8)"/>
<rect x="-2.7" y="-2.1" width="5.4" height="4.3" transform="translate(500.5,621.8) rotate(80)"/>
<rect x="-2.5" y="-1.7" width="5.0" height="3.4" transform="translate(485.5,637.5) rotate(80)"/>
<rect x="-3.2" y="-3.0" width="6.4" height="5.9" transform="translate(497.3,602.3) rotate(-65)"/>
<rect x="-2.4" y="-2.0" width="4.9" height="4.0" transform="translate(492.0,630.0) rotate(15)"/>
<rect x="-3.2" y="-2.6" width="6.4" height="5.2" transform="translate(558.3,546.5) rotate(15)"/>
<rect x="-1.8" y="-1.8" width="3.5" height="3.6" transform="translate(572.7,607.0) rotate(80)"/>
<rect x="-2.3" y="-2.6" width="4.6" height="5.1" transform="translate(561.7,621.8) rotate(0)"/>
<rect x="-1.8" y="-2.0" width="3.5" height="3.9" transform="translate(571.2,566.8) rotate(80)"/>
<rect x="-3.2" y="-2.7" width="6.4" height="5.4" transform="translate(575.8,554.4) rotate(-30)"/>
<rect x="-2.1" y="-2.7" width="4.1" height="5.3" transform="translate(564.8,613.6) rotate(0)"/>
<rect x="-5.0" y="-2.4" width="10.0" height="4.8" transform="translate(560.9,605.5) rotate(25)"/>
<rect x="-3.1" y="-2.8" width="6.2" height="5.7" transform="translate(556.8,593.7) rotate(-30)"/>
<rect x="-2.1" y="-1.7" width="4.1" height="3.5" transform="translate(599.3,540.6) rotate(8)"/>
<rect x="-5.2" y="-2.1" width="10.4" height="4.2" transform="translate(584.3,538.6) rotate(-65)"/>
<rect x="-1.9" y="-1.9" width="3.8" height="3.8" transform="translate(589.8,545.9) rotate(80)"/>
<rect x="-5.1" y="-2.0" width="10.2" height="3.9" transform="translate(610.2,548.6) rotate(0)"/>
<rect x="-1.8" y="-1.6" width="3.6" height="3.3" transform="translate(619.8,542.9) rotate(-30)"/>
<rect x="-3.1" y="-2.8" width="6.2" height="5.6" transform="translate(181.5,772.4) rotate(-12)"/>
<rect x="-3.6" y="-1.9" width="7.1" height="3.9" transform="translate(222.8,705.9) rotate(-65)"/>
<rect x="-3.0" y="-2.1" width="6.0" height="4.2" transform="translate(185.2,714.1) rotate(0)"/>
<rect x="-3.2" y="-1.7" width="6.3" height="3.4" transform="translate(122.4,780.9) rotate(-20)"/>
<rect x="-2.9" y="-2.6" width="5.9" height="5.2" transform="translate(247.4,702.1) rotate(-30)"/>
<rect x="-4.2" y="-2.7" width="8.4" height="5.3" transform="translate(217.3,724.3) rotate(15)"/>
<rect x="-2.3" y="-2.1" width="4.6" height="4.3" transform="translate(159.9,732.3) rotate(0)"/>
<rect x="-3.0" y="-1.7" width="6.0" height="3.4" transform="translate(240.2,711.8) rotate(15)"/>
<rect x="-2.4" y="-1.7" width="4.8" height="3.5" transform="translate(257.1,710.3) rotate(-20)"/>
<rect x="-2.3" y="-2.8" width="4.5" height="5.5" transform="translate(208.1,737.8) rotate(-65)"/>
<rect x="-2.4" y="-2.8" width="4.9" height="5.7" transform="translate(228.4,713.9) rotate(0)"/>
<rect x="-2.0" y="-2.0" width="4.0" height="4.0" transform="translate(140.1,734.2) rotate(15)"/>
<rect x="-1.9" y="-2.2" width="3.8" height="4.5" transform="translate(241.2,720.9) rotate(0)"/>
<rect x="-3.1" y="-2.5" width="6.2" height="5.1" transform="translate(274.0,703.0) rotate(-30)"/>
<rect x="-2.1" y="-1.9" width="4.2" height="3.9" transform="translate(171.2,721.0) rotate(25)"/>
<rect x="-3.2" y="-1.6" width="6.4" height="3.2" transform="translate(226.6,723.8) rotate(15)"/>
<rect x="-2.9" y="-2.9" width="5.9" height="5.8" transform="translate(186.0,737.0) rotate(15)"/>
<rect x="-3.3" y="-2.4" width="6.6" height="4.8" transform="translate(171.8,778.3) rotate(0)"/>
<rect x="-3.0" y="-2.8" width="6.0" height="5.7" transform="translate(123.0,750.9) rotate(8)"/>
<rect x="-2.8" y="-2.5" width="5.5" height="5.0" transform="translate(123.0,710.1) rotate(8)"/>
<rect x="-2.8" y="-2.2" width="5.7" height="4.3" transform="translate(128.0,703.8) rotate(-20)"/>
<rect x="-2.2" y="-2.5" width="4.3" height="5.0" transform="translate(187.5,728.6) rotate(-12)"/>
<rect x="-3.0" y="-2.1" width="6.0" height="4.2" transform="translate(140.1,714.4) rotate(15)"/>
<rect x="-2.3" y="-2.9" width="4.6" height="5.8" transform="translate(198.1,773.5) rotate(-12)"/>
<rect x="-3.0" y="-2.8" width="5.9" height="5.6" transform="translate(112.7,760.9) rotate(25)"/>
<rect x="-4.6" y="-2.2" width="9.1" height="4.5" transform="translate(144.8,707.5) rotate(70)"/>
<rect x="-2.0" y="-2.0" width="4.0" height="4.1" transform="translate(106.7,752.5) rotate(-20)"/>
<rect x="-2.9" y="-2.0" width="5.7" height="3.9" transform="translate(93.7,779.5) rotate(-65)"/>
<rect x="-2.8" y="-1.7" width="5.6" height="3.5" transform="translate(198.4,744.0) rotate(0)"/>
<rect x="-4.2" y="-2.8" width="8.4" height="5.6" transform="translate(166.3,710.1) rotate(80)"/>
<rect x="-2.7" y="-2.6" width="5.4" height="5.1" transform="translate(110.1,659.1) rotate(80)"/>
<rect x="-3.2" y="-2.7" width="6.3" height="5.4" transform="translate(69.9,680.6) rotate(0)"/>
<rect x="-3.0" y="-2.4" width="6.0" height="4.8" transform="translate(99.7,698.8) rotate(15)"/>
<rect x="-2.5" y="-1.7" width="5.1" height="3.4" transform="translate(80.1,678.8) rotate(70)"/>
<rect x="-2.4" y="-2.2" width="4.8" height="4.3" transform="translate(83.6,670.9) rotate(-30)"/>
<rect x="-4.9" y="-2.8" width="9.8" height="5.7" transform="translate(80.2,704.1) rotate(-65)"/>
<rect x="-4.7" y="-1.7" width="9.5" height="3.3" transform="translate(79.2,693.8) rotate(-12)"/>
<rect x="-3.5" y="-2.5" width="7.1" height="5.0" transform="translate(110.3,674.4) rotate(80)"/>
<rect x="-2.4" y="-2.3" width="4.8" height="4.6" transform="translate(76.1,711.1) rotate(25)"/>
<rect x="-2.2" y="-2.2" width="4.4" height="4.5" transform="translate(89.9,700.2) rotate(0)"/>
<rect x="-2.8" y="-2.2" width="5.6" height="4.5" transform="translate(666.2,776.1) rotate(80)"/>
<rect x="-1.8" y="-2.1" width="3.6" height="4.1" transform="translate(654.5,825.5) rotate(70)"/>
<rect x="-1.8" y="-2.1" width="3.5" height="4.2" transform="translate(648.1,806.9) rotate(0)"/>
<rect x="-2.2" y="-2.8" width="4.3" height="5.7" transform="translate(644.0,786.0) rotate(-20)"/>
<rect x="-1.9" y="-2.8" width="3.7" height="5.6" transform="translate(674.5,772.7) rotate(-20)"/>
<rect x="-2.5" y="-3.0" width="5.1" height="6.0" transform="translate(646.1,821.0) rotate(0)"/>
<rect x="-3.2" y="-2.0" width="6.5" height="4.0" transform="translate(680.2,833.8) rotate(-65)"/>
<rect x="-3.1" y="-1.6" width="6.1" height="3.2" transform="translate(684.2,770.2) rotate(80)"/>
<rect x="-3.2" y="-1.8" width="6.5" height="3.6" transform="translate(630.0,791.8) rotate(8)"/>
<rect x="-2.3" y="-2.2" width="4.6" height="4.5" transform="translate(681.3,808.6) rotate(15)"/>
<rect x="-2.2" y="-2.7" width="4.5" height="5.4" transform="translate(659.8,790.8) rotate(-30)"/>
<rect x="-2.1" y="-2.8" width="4.2" height="5.5" transform="translate(651.6,790.2) rotate(80)"/>
<rect x="-2.5" y="-2.9" width="5.0" height="5.8" transform="translate(625.2,805.2) rotate(70)"/>
<rect x="-3.8" y="-2.2" width="7.7" height="4.5" transform="translate(678.1,818.2) rotate(-65)"/>
<rect x="-4.4" y="-2.3" width="8.8" height="4.7" transform="translate(645.9,835.8) rotate(15)"/>
<rect x="-3.1" y="-1.8" width="6.3" height="3.6" transform="translate(656.1,811.9) rotate(25)"/>
<rect x="-2.3" y="-2.3" width="4.5" height="4.7" transform="translate(818.7,839.7) rotate(0)"/>
<rect x="-1.9" y="-2.0" width="3.7" height="4.1" transform="translate(768.9,795.7) rotate(-65)"/>
<rect x="-3.1" y="-2.2" width="6.2" height="4.4" transform="translate(855.9,839.3) rotate(8)"/>
<rect x="-1.9" y="-2.4" width="3.8" height="4.8" transform="translate(711.4,809.5) rotate(-20)"/>
<rect x="-2.6" y="-2.9" width="5.2" height="5.8" transform="translate(700.5,819.7) rotate(-12)"/>
<rect x="-2.0" y="-2.3" width="4.1" height="4.6" transform="translate(811.4,816.8) rotate(8)"/>
<rect x="-2.5" y="-1.8" width="5.0" height="3.6" transform="translate(865.5,832.7) rotate(80)"/>
<rect x="-4.6" y="-1.7" width="9.2" height="3.5" transform="translate(723.1,781.0) rotate(0)"/>
<rect x="-3.0" y="-2.5" width="5.9" height="5.0" transform="translate(788.8,800.1) rotate(80)"/>
<rect x="-2.3" y="-1.8" width="4.6" height="3.7" transform="translate(761.3,820.1) rotate(-12)"/>
<rect x="-2.7" y="-1.6" width="5.4" height="3.3" transform="translate(712.0,783.4) rotate(25)"/>
<rect x="-2.4" y="-2.5" width="4.8" height="4.9" transform="translate(810.7,837.2) rotate(-20)"/>
<rect x="-2.0" y="-1.6" width="4.0" height="3.2" transform="translate(730.3,811.1) rotate(-30)"/>
<rect x="-3.2" y="-2.3" width="6.4" height="4.6" transform="translate(757.7,812.2) rotate(0)"/>
<rect x="-2.6" y="-2.2" width="5.3" height="4.4" transform="translate(828.7,817.2) rotate(-30)"/>
<rect x="-1.9" y="-1.8" width="3.8" height="3.7" transform="translate(704.3,830.8) rotate(-20)"/>
<rect x="-2.3" y="-1.9" width="4.6" height="3.9" transform="translate(723.4,827.8) rotate(8)"/>
<rect x="-2.6" y="-2.3" width="5.2" height="4.5" transform="translate(803.5,825.1) rotate(0)"/>
<rect x="-2.8" y="-2.1" width="5.7" height="4.3" transform="translate(730.3,794.7) rotate(0)"/>
<rect x="-2.1" y="-2.8" width="4.1" height="5.6" transform="translate(756.5,803.3) rotate(8)"/>
<rect x="-1.9" y="-2.7" width="3.9" height="5.3" transform="translate(776.8,805.7) rotate(-12)"/>
<rect x="-2.1" y="-1.8" width="4.2" height="3.6" transform="translate(712.5,791.8) rotate(8)"/>
<rect x="-2.4" y="-2.5" width="4.9" height="5.0" transform="translate(767.6,829.1) rotate(0)"/>
<rect x="-1.8" y="-2.6" width="3.6" height="5.2" transform="translate(831.3,832.8) rotate(25)"/>
<rect x="-2.0" y="-1.8" width="4.0" height="3.5" transform="translate(766.9,814.0) rotate(0)"/>
<rect x="-2.3" y="-1.7" width="4.6" height="3.3" transform="translate(737.6,791.2) rotate(-65)"/>
<rect x="-2.5" y="-2.9" width="5.1" height="5.8" transform="translate(743.3,804.9) rotate(80)"/>
<rect x="-2.2" y="-1.7" width="4.4" height="3.3" transform="translate(858.5,824.4) rotate(80)"/>
<rect x="-3.2" y="-2.5" width="6.5" height="4.9" transform="translate(779.3,822.1) rotate(70)"/>
<rect x="-2.4" y="-2.9" width="4.8" height="5.8" transform="translate(717.1,836.2) rotate(-65)"/>
<rect x="-3.0" y="-2.4" width="6.0" height="4.8" transform="translate(736.0,836.7) rotate(0)"/>
<rect x="-2.5" y="-2.2" width="5.0" height="4.4" transform="translate(745.2,786.9) rotate(15)"/>
<rect x="-1.9" y="-2.2" width="3.9" height="4.4" transform="translate(745.7,814.1) rotate(-65)"/>
<rect x="-3.0" y="-1.8" width="6.0" height="3.5" transform="translate(787.6,823.6) rotate(15)"/>
<rect x="-4.9" y="-2.0" width="9.9" height="4.1" transform="translate(690.0,683.1) rotate(8)"/>
<rect x="-3.7" y="-1.8" width="7.3" height="3.7" transform="translate(684.0,713.7) rotate(-20)"/>
<rect x="-2.2" y="-2.6" width="4.5" height="5.3" transform="translate(690.0,733.8) rotate(-65)"/>
<rect x="-3.2" y="-2.5" width="6.3" height="5.0" transform="translate(695.8,725.2) rotate(0)"/>
<rect x="-2.9" y="-2.2" width="5.7" height="4.3" transform="translate(674.9,733.8) rotate(15)"/>
<rect x="-3.0" y="-2.9" width="6.0" height="5.8" transform="translate(678.9,725.9) rotate(8)"/>
<rect x="-2.0" y="-2.8" width="4.1" height="5.5" transform="translate(657.3,711.1) rotate(15)"/>
<rect x="-4.8" y="-2.0" width="9.6" height="3.9" transform="translate(644.0,731.3) rotate(-12)"/>
<rect x="-3.0" y="-2.6" width="6.0" height="5.2" transform="translate(653.5,721.4) rotate(0)"/>
<rect x="-2.6" y="-1.7" width="5.2" height="3.4" transform="translate(644.5,710.2) rotate(0)"/>
<rect x="-2.4" y="-3.0" width="4.7" height="5.9" transform="translate(543.9,794.0) rotate(-30)"/>
<rect x="-3.0" y="-2.7" width="6.1" height="5.4" transform="translate(542.0,809.7) rotate(8)"/>
<rect x="-4.5" y="-2.8" width="9.0" height="5.7" transform="translate(543.0,749.3) rotate(-20)"/>
<rect x="-3.1" y="-1.8" width="6.2" height="3.7" transform="translate(551.3,808.6) rotate(-30)"/>
<rect x="-2.6" y="-2.3" width="5.2" height="4.5" transform="translate(485.5,722.3) rotate(70)"/>
<rect x="-3.1" y="-2.8" width="6.2" height="5.6" transform="translate(477.6,732.1) rotate(80)"/>
<rect x="-2.7" y="-2.0" width="5.3" height="4.0" transform="translate(468.4,722.3) rotate(15)"/>
<rect x="-2.2" y="-2.1" width="4.4" height="4.2" transform="translate(501.2,674.5) rotate(-20)"/>
<rect x="-4.6" y="-2.6" width="9.2" height="5.1" transform="translate(506.0,663.0) rotate(80)"/>
<rect x="-10.0" y="-3.0" width="20.0" height="6.0" transform="translate(257.0,520.0) rotate(0)"/>
<rect x="-3.0" y="-7.0" width="6.0" height="14.0" transform="translate(267.0,528.0) rotate(0)"/>
<rect x="-2.2" y="-6.5" width="4.5" height="13.0" transform="translate(245.5,625.0) rotate(0)"/>
<rect x="-2.0" y="-2.5" width="4.0" height="5.0" transform="translate(230.0,615.0) rotate(0)"/>
<rect x="-3.5" y="-6.0" width="7.0" height="12.0" transform="translate(299.5,768.0) rotate(0)"/>
<rect x="-3.0" y="-9.0" width="6.0" height="18.0" transform="translate(304.0,778.0) rotate(0)"/>
<rect x="-4.5" y="-11.0" width="9.0" height="22.0" transform="translate(299.0,806.0) rotate(0)"/>
<rect x="-2.5" y="-3.0" width="5.0" height="6.0" transform="translate(309.0,799.0) rotate(0)"/>
<rect x="-6.0" y="-2.5" width="12.0" height="5.0" transform="translate(157.0,698.0) rotate(-25)"/>
<rect x="-4.0" y="-4.0" width="8.0" height="8.0" transform="translate(167.0,705.0) rotate(-35)"/>
<rect x="-3.0" y="-3.0" width="6.0" height="6.0" transform="translate(186.0,693.0) rotate(-40)"/>
<rect x="-2.5" y="-2.5" width="5.0" height="5.0" transform="translate(550.0,850.0) rotate(0)"/>
<rect x="-2.0" y="-5.0" width="4.0" height="10.0" transform="translate(483.0,673.0) rotate(0)"/>
<rect x="-4.0" y="-2.5" width="8.0" height="5.0" transform="translate(487.0,664.0) rotate(0)"/>
<rect x="-3.5" y="-4.0" width="7.0" height="8.0" transform="translate(484.0,709.0) rotate(0)"/>
<rect x="-4.0" y="-4.5" width="8.0" height="9.0" transform="translate(482.5,752.0) rotate(0)"/>
<rect x="-2.5" y="-5.0" width="5.0" height="10.0" transform="translate(508.0,752.0) rotate(0)"/>
<rect x="-4.0" y="-4.0" width="8.0" height="8.0" transform="translate(550.0,772.0) rotate(0)"/>
<rect x="-3.5" y="-3.5" width="7.0" height="7.0" transform="translate(566.0,782.0) rotate(0)"/>
<rect x="-3.5" y="-4.0" width="7.0" height="8.0" transform="translate(588.0,769.0) rotate(0)"/>
<rect x="-2.5" y="-5.0" width="5.0" height="10.0" transform="translate(552.0,799.0) rotate(0)"/>
<rect x="-5.0" y="-2.5" width="10.0" height="5.0" transform="translate(549.0,821.0) rotate(0)"/>
<rect x="-2.5" y="-2.5" width="5.0" height="5.0" transform="translate(558.5,816.0) rotate(0)"/>
<rect x="-4.0" y="-2.5" width="8.0" height="5.0" transform="translate(578.5,688.5) rotate(0)"/>
<rect x="-3.0" y="-2.5" width="6.0" height="5.0" transform="translate(563.0,664.5) rotate(0)"/>
<rect x="-4.0" y="-2.5" width="8.0" height="5.0" transform="translate(545.0,663.0) rotate(-10)"/>
</g>
<g fill="#e2c8c0" stroke="#d0b0a8" stroke-width=".6"><rect x="839" y="474" width="4" height="4" transform="rotate(25 841 476)"/><rect x="858.5" y="499" width="4" height="4" transform="rotate(25 860.5 501)"/><rect x="886" y="507.5" width="4" height="4" transform="rotate(25 888 509.5)"/><rect x="897" y="510" width="4" height="4" transform="rotate(25 899 512)"/><rect x="907.5" y="518.5" width="4" height="4" transform="rotate(25 909.5 520.5)"/><rect x="929.5" y="538.5" width="4" height="4" transform="rotate(25 931.5 540.5)"/><rect x="912.5" y="542" width="4" height="4" transform="rotate(25 914.5 544)"/><rect x="952.5" y="483.5" width="4" height="4" transform="rotate(25 954.5 485.5)"/><rect x="978.5" y="470" width="4" height="4" transform="rotate(25 980.5 472)"/></g>
<g fill="none" stroke="#96bd8c" stroke-width="1.25"><ellipse cx="793.8" cy="487.5" rx="3.8" ry="4.5"/><path d="M793.8,492.0 v7.5 M785.5,483.0 l-3.9,11 h7.8 z M785.5,494.0 v5.5"/><ellipse cx="738.2" cy="500.5" rx="3.8" ry="4.5"/><path d="M738.2,505.0 v7.5 M746.5,496.0 l-3.9,11 h7.8 z M746.5,507.0 v5.5"/><ellipse cx="835.2" cy="497.5" rx="3.8" ry="4.5"/><path d="M835.2,502.0 v7.5 M843.5,493.0 l-3.9,11 h7.8 z M843.5,504.0 v5.5"/><ellipse cx="788.3" cy="538.0" rx="3.8" ry="4.5"/><path d="M788.3,542.5 v7.5 M780.0,533.5 l-3.9,11 h7.8 z M780.0,544.5 v5.5"/><ellipse cx="717.2" cy="547.5" rx="3.8" ry="4.5"/><path d="M717.2,552.0 v7.5 M725.5,543.0 l-3.9,11 h7.8 z M725.5,554.0 v5.5"/><ellipse cx="870.2" cy="535.5" rx="3.8" ry="4.5"/><path d="M870.2,540.0 v7.5 M878.5,531.0 l-3.9,11 h7.8 z M878.5,542.0 v5.5"/><ellipse cx="831.8" cy="564.0" rx="3.8" ry="4.5"/><path d="M831.8,568.5 v7.5 M823.5,559.5 l-3.9,11 h7.8 z M823.5,570.5 v5.5"/><ellipse cx="788.2" cy="594.5" rx="3.8" ry="4.5"/><path d="M788.2,599.0 v7.5 M796.5,590.0 l-3.9,11 h7.8 z M796.5,601.0 v5.5"/><ellipse cx="864.7" cy="598.0" rx="3.8" ry="4.5"/><path d="M864.7,602.5 v7.5 M873.0,593.5 l-3.9,11 h7.8 z M873.0,604.5 v5.5"/><ellipse cx="993.3" cy="494.5" rx="3.8" ry="4.5"/><path d="M993.3,499.0 v7.5 M985.0,490.0 l-3.9,11 h7.8 z M985.0,501.0 v5.5"/><ellipse cx="701.7" cy="467.5" rx="3.8" ry="4.5"/><path d="M701.7,472.0 v7.5 M710.0,463.0 l-3.9,11 h7.8 z M710.0,474.0 v5.5"/><ellipse cx="681.7" cy="501.5" rx="3.8" ry="4.5"/><path d="M681.7,506.0 v7.5 M690.0,497.0 l-3.9,11 h7.8 z M690.0,508.0 v5.5"/><ellipse cx="1324.8" cy="490.5" rx="3.8" ry="4.5"/><path d="M1324.8,495.0 v7.5 M1316.5,486.0 l-3.9,11 h7.8 z M1316.5,497.0 v5.5"/><ellipse cx="1302.2" cy="538.0" rx="3.8" ry="4.5"/><path d="M1302.2,542.5 v7.5 M1310.5,533.5 l-3.9,11 h7.8 z M1310.5,544.5 v5.5"/><ellipse cx="14.7" cy="776.5" rx="3.8" ry="4.5"/><path d="M14.7,781.0 v7.5 M23.0,772.0 l-3.9,11 h7.8 z M23.0,783.0 v5.5"/><ellipse cx="54.3" cy="740.0" rx="3.8" ry="4.5"/><path d="M54.3,744.5 v7.5 M46.0,735.5 l-3.9,11 h7.8 z M46.0,746.5 v5.5"/><ellipse cx="1317.7" cy="811.5" rx="3.8" ry="4.5"/><path d="M1317.7,816.0 v7.5 M1326.0,807.0 l-3.9,11 h7.8 z M1326.0,818.0 v5.5"/><ellipse cx="1257.7" cy="834.5" rx="3.8" ry="4.5"/><path d="M1257.7,839.0 v7.5 M1266.0,830.0 l-3.9,11 h7.8 z M1266.0,841.0 v5.5"/><ellipse cx="39.3" cy="816.5" rx="3.8" ry="4.5"/><path d="M39.3,821.0 v7.5 M31.0,812.0 l-3.9,11 h7.8 z M31.0,823.0 v5.5"/><ellipse cx="607.7" cy="792.5" rx="3.8" ry="4.5"/><path d="M607.7,797.0 v7.5 M616.0,788.0 l-3.9,11 h7.8 z M616.0,799.0 v5.5"/><ellipse cx="11.7" cy="701.5" rx="3.8" ry="4.5"/><path d="M11.7,706.0 v7.5 M20.0,697.0 l-3.9,11 h7.8 z M20.0,708.0 v5.5"/><ellipse cx="1314.3" cy="658.5" rx="3.8" ry="4.5"/><path d="M1314.3,663.0 v7.5 M1306.0,654.0 l-3.9,11 h7.8 z M1306.0,665.0 v5.5"/></g>
<!-- cemetery -->
<path d="M106.5,628.5 L178,611 L196.5,657.5 L124,685.5 Z" fill="#aacbaf"/>
<g fill="#a0c7a6"><path d="M111.5,632.2 L122.2,629.6 L137.4,679.1 L126.7,681.8 Z"/><path d="M127.6,627.0 L140.4,623.9 L146.4,643.2 L133.5,646.4 Z"/><path d="M145.4,622.6 L157.6,619.7 L163.6,639.0 L151.4,642.0 Z"/><path d="M162.6,618.4 L176.2,615.1 L182.1,634.5 L168.6,637.8 Z"/><path d="M135.3,652.1 L148.1,649.0 L155.7,673.5 L142.8,676.6 Z"/><path d="M153.1,647.7 L165.3,644.8 L172.8,669.3 L160.7,672.2 Z"/><path d="M170.3,643.5 L183.9,640.2 L191.4,664.7 L177.8,668.0 Z"/></g>
<g fill="none" stroke="#f08f86" stroke-width="1.3" stroke-dasharray="2 2.4" opacity=".95">
<path d="M124.0,625.4 L140.6,679.6 M142.2,621.0 L158.9,675.1 M159.4,616.8 L176.0,670.9 M177.3,612.4 L193.9,666.6 M124.0,625.4 L177.3,612.4 M131.5,649.9 L184.8,636.9 M140.6,679.6 L193.9,666.6"/>
</g>
<!-- pale track casings -->
<g fill="none" stroke="#f9f8f5" stroke-width="4.6" stroke-linecap="round" stroke-linejoin="round">
<path d="M1207.0,479.0 C1207.0,479.0 1199.5,489.1 1196.0,494.0 C1192.5,498.9 1189.2,503.9 1186.0,508.5 C1182.8,513.1 1180.7,517.5 1177.0,521.5 C1173.3,525.5 1169.0,527.9 1164.0,532.5 C1159.0,537.1 1148.2,548.0 1140.0,555.5 C1131.8,563.0 1119.7,573.0 1115.0,577.5 C1110.3,582.0 1108.2,585.8 1104.0,589.5 C1099.8,593.2 1093.8,596.2 1089.5,600.0 C1085.2,603.8 1081.8,608.8 1078.0,612.5 C1074.2,616.2 1071.1,618.9 1067.0,622.5 C1062.9,626.1 1056.5,629.5 1053.5,634.0 C1050.5,638.5 1048.5,644.5 1049.0,649.5 C1049.5,654.5 1053.8,658.9 1056.5,664.0 C1059.2,669.1 1061.7,674.6 1065.0,680.0 C1068.3,685.4 1073.5,689.8 1076.5,696.5 C1079.5,703.2 1080.4,713.9 1083.0,720.5 C1085.6,727.1 1087.9,730.1 1092.0,736.0 C1096.1,741.9 1108.7,758.6 1114.0,764.5 C1119.3,770.4 1124.7,771.7 1129.0,777.5 C1133.3,783.3 1136.3,792.2 1140.0,799.5 C1143.7,806.8 1148.1,814.4 1151.0,821.5 C1153.9,828.6 1157.5,842.0 1157.5,842.0"/>
<path d="M1177.0,521.5 C1177.0,521.5 1188.7,520.7 1194.5,520.5 C1200.3,520.3 1206.3,519.8 1212.0,520.5 C1217.7,521.2 1223.2,522.7 1228.5,524.5 C1233.8,526.3 1238.9,529.1 1244.0,531.5 C1249.1,533.9 1254.2,536.1 1259.0,539.0 C1263.8,541.9 1268.1,545.7 1272.5,549.0 C1276.9,552.3 1280.8,555.9 1285.5,559.0 C1290.2,562.1 1298.1,566.0 1301.0,567.5 C1303.9,569.0 1308.5,571.0 1308.5,571.0"/>
<path d="M1295.5,583.0 C1295.5,583.0 1288.2,592.4 1284.5,595.0 C1280.8,597.6 1277.8,596.7 1273.5,598.5 C1269.2,600.3 1262.8,603.2 1258.0,606.0 C1253.2,608.8 1249.3,612.1 1245.0,615.5 C1240.7,618.9 1236.3,623.0 1232.0,626.5 C1227.7,630.0 1223.8,633.4 1219.0,636.5 C1214.2,639.6 1208.2,641.8 1203.5,645.0 C1198.8,648.2 1194.5,652.3 1190.5,656.0 C1186.5,659.7 1183.9,663.5 1179.5,667.0 C1175.1,670.5 1168.8,673.2 1164.0,677.0 C1159.2,680.8 1155.0,685.8 1151.0,690.0 C1147.0,694.2 1143.2,698.0 1140.0,702.0 C1136.8,706.0 1134.4,709.8 1131.5,714.0 C1128.6,718.2 1125.1,722.2 1122.5,727.0 C1119.9,731.8 1116.0,737.3 1116.0,742.5 C1116.0,747.7 1120.3,752.8 1122.5,758.0 C1124.7,763.2 1129.0,774.0 1129.0,774.0"/>
<path d="M1284.5,595.0 C1284.5,595.0 1281.0,606.2 1279.0,611.5 C1277.0,616.8 1275.2,621.6 1272.5,626.5 C1269.8,631.4 1265.6,636.2 1262.5,641.0 C1259.4,645.8 1257.2,650.1 1254.0,655.0 C1250.8,659.9 1246.3,665.4 1243.0,670.5 C1239.7,675.6 1236.8,680.8 1234.0,685.5 C1231.2,690.2 1228.5,694.2 1226.5,699.0 C1224.5,703.8 1222.8,708.6 1222.0,714.0 C1221.2,719.4 1221.8,726.0 1222.0,731.5 C1222.2,737.0 1222.2,741.5 1223.0,747.0 C1223.8,752.5 1225.4,759.1 1226.5,764.5 C1227.6,769.9 1227.7,774.4 1229.5,779.5 C1231.3,784.6 1235.7,789.8 1237.5,795.0 C1239.3,800.2 1240.5,810.5 1240.5,810.5"/>
<path d="M1025.5,641.5 C1025.5,641.5 1033.2,648.6 1036.0,653.0 C1038.8,657.4 1039.2,663.6 1042.5,668.0 C1045.8,672.4 1051.5,674.0 1056.0,679.5 C1060.5,685.0 1065.3,694.1 1070.0,702.0 C1074.7,709.9 1080.0,718.1 1084.0,727.0 C1088.0,735.9 1090.8,745.6 1094.0,755.5 C1097.2,765.4 1100.4,775.5 1103.0,786.5 C1105.6,797.5 1107.7,813.2 1109.5,821.5 C1111.3,829.8 1115.0,842.0 1115.0,842.0"/>
<path d="M1309.5,576.5 C1309.5,576.5 1306.2,586.1 1304.0,592.5 C1301.8,598.9 1298.4,609.3 1295.5,617.0 C1292.6,624.7 1289.2,632.0 1286.5,638.5 C1283.8,645.0 1282.4,649.6 1279.0,656.0 C1275.6,662.4 1269.3,669.8 1266.0,677.0 C1262.7,684.2 1260.8,690.7 1259.0,699.0 C1257.2,707.3 1256.6,716.8 1255.0,727.0 C1253.4,737.2 1251.3,750.1 1249.5,760.0 C1247.7,769.9 1245.5,778.5 1244.0,786.5 C1242.5,794.5 1240.5,808.0 1240.5,808.0" stroke-width="2.5"/>
</g>
<!-- roads casing -->
<g fill="none" stroke="#cfccc8" stroke-linecap="round" stroke-linejoin="round">
<path d="M0,554.5 L72,529.5 L135.5,508.5 L186,481 L193,469" stroke-width="8"/>
<path d="M0,634 L41.5,614 L91,583 L153,562 L232,550 L287,537" stroke-width="8.5"/>
<path d="M0,687.5 L101,643" stroke-width="8"/>
<path d="M73,530 L92,584 L103.5,623.5 L111.5,658.5 L122,690.5" stroke-width="8"/>
<path d="M136.5,509.5 L153,556" stroke-width="7.5"/>
<path d="M188,480 L208,549" stroke-width="7.5"/>
<path d="M103.5,623.5 L157,607 L215,584 L243,550" stroke-width="8"/>
<path d="M223.5,580 L224.5,636 L207,659.5 L122,690.5 L55,751.5" stroke-width="8.5"/>
<path d="M122,690.5 L145,706 L198.5,743.5 L217,748.5 L260,752.5 L281,757" stroke-width="8"/>
<path d="M290,472 L340,474.5 L621,485.5 M558,469 L558,483" stroke-width="8"/>
<path d="M480,469 L479,528" stroke-width="8"/>
<path d="M482,529 L626.5,534.5" stroke-width="8"/>
<path d="M474.5,536 L467,655 L461.5,738" stroke-width="8"/>
<path d="M449.5,533.5 L392.5,582 L368.5,617 L340,654 L291,738" stroke-width="8.5"/>
<path d="M294,562 L340,564.5 L392.5,582" stroke-width="7"/>
<path d="M378.5,613.5 L548,632" stroke-width="7.5"/>
<path d="M378.5,613.5 L377,643 L368.5,658 L340,696.5 L328,725 L326,738" stroke-width="7.5"/>
<path d="M377,645 L408,649.5 L410,658 L405.5,738" stroke-width="7.5"/>
<path d="M291,741.5 L340,742.5 L646,737" stroke-width="8"/>
<path d="M651,745 L651,808" stroke-width="6"/>
<path d="M848.5,469 L937,526.5" stroke-width="9"/>
<path d="M946.5,469 L980,491" stroke-width="9"/>
<path d="M655,742.5 L870,818" stroke-width="8.6" stroke-linecap="butt"/>
<path d="M689,795 L689,843" stroke-width="9"/>
<path d="M290.3,469 L290.3,530" stroke-width="7"/><path d="M288.3,528 L283.3,843" stroke-width="14"/>
<path d="M290,534 L340,530.5 L424,528 L478,528" stroke-width="14.5"/>
<path d="M477.8,531.4 L742,843" stroke-width="12.5"/>
</g>
<path d="M477.8,544.6 L550,630 L633,732.5" fill="none" stroke="#c9c6c2" stroke-width="1.6"/>
<!-- roads fill -->
<g fill="none" stroke="#fff" stroke-linecap="round" stroke-linejoin="round">
<path d="M0,554.5 L72,529.5 L135.5,508.5 L186,481 L193,469" stroke-width="6.5"/>
<path d="M0,634 L41.5,614 L91,583 L153,562 L232,550 L287,537" stroke-width="7"/>
<path d="M0,687.5 L101,643" stroke-width="6.5"/>
<path d="M73,530 L92,584 L103.5,623.5 L111.5,658.5 L122,690.5" stroke-width="6.5"/>
<path d="M136.5,509.5 L153,556" stroke-width="6"/>
<path d="M188,480 L208,549" stroke-width="6"/>
<path d="M103.5,623.5 L157,607 L215,584 L243,550" stroke-width="6.5"/>
<path d="M223.5,580 L224.5,636 L207,659.5 L122,690.5 L55,751.5" stroke-width="7"/>
<path d="M122,690.5 L145,706 L198.5,743.5 L217,748.5 L260,752.5 L281,757" stroke-width="6.5"/>
<path d="M290,472 L340,474.5 L621,485.5 M558,469 L558,483" stroke-width="6.5"/>
<path d="M480,469 L479,528" stroke-width="6.5"/>
<path d="M482,529 L626.5,534.5" stroke-width="6.5"/>
<path d="M474.5,536 L467,655 L461.5,738" stroke-width="6.5"/>
<path d="M449.5,533.5 L392.5,582 L368.5,617 L340,654 L291,738" stroke-width="7"/>
<path d="M294,562 L340,564.5 L392.5,582" stroke-width="5.5"/>
<path d="M378.5,613.5 L548,632" stroke-width="6"/>
<path d="M378.5,613.5 L377,643 L368.5,658 L340,696.5 L328,725 L326,738" stroke-width="6"/>
<path d="M377,645 L408,649.5 L410,658 L405.5,738" stroke-width="6"/>
<path d="M291,741.5 L340,742.5 L646,737" stroke-width="6.5"/>
<path d="M651,745 L651,808" stroke-width="4.5"/>
<path d="M848.5,469 L937,526.5" stroke-width="7.5"/>
<path d="M946.5,469 L980,491" stroke-width="7.5"/>
<path d="M655,742.5 L870,818" stroke-width="7.2" stroke-linecap="butt"/>
<path d="M689,795 L689,843" stroke-width="7.5"/>
<path d="M290.3,469 L290.3,530" stroke-width="5.5"/><path d="M288.3,528 L283.3,843" stroke-width="12.5"/>
<path d="M290,534 L340,530.5 L424,528 L478,528" stroke-width="13"/>
<path d="M477.8,531.4 L742,843" stroke-width="11"/>
</g>
<!-- light path (Lawendowa) -->
<path d="M456,745 L456,842" fill="none" stroke="#f0dcc0" stroke-width="2" stroke-dasharray="5 3"/>
<!-- dotted grey pedestrian strip -->
<path d="M1309,522.5 L1334,541 L1306.5,573" fill="none" stroke="#fdfdfd" stroke-width="6"/>
<path d="M1309,522.5 L1334,541 L1306.5,573" fill="none" stroke="#bdbdbd" stroke-width="5" stroke-dasharray="1 2" opacity=".5"/><circle cx="1295" cy="528" r="3" fill="#d3b5b3"/>
<!-- footways dotted -->
<g fill="none" stroke="#f7807c" stroke-width="1.6" stroke-dasharray="2.6 4">
<path d="M619.0,470.0 C619.0,470.0 620.8,500.7 622.0,512.0 C623.2,523.3 624.5,528.8 626.5,540.0 C628.5,551.2 633.9,580.2 635.5,586.0 C637.1,591.8 640.6,593.5 643.0,599.0 C645.4,604.5 646.5,613.2 650.5,621.0 C654.5,628.8 662.8,641.0 667.0,646.0 C671.2,651.0 674.7,652.2 680.0,656.0 C685.3,659.8 694.2,664.4 699.0,669.0 C703.8,673.6 704.2,678.1 708.5,683.5 C712.8,688.9 732.4,711.5 745.5,727.0 C758.6,742.5 785.2,773.9 787.0,776.5 C788.8,779.1 785.0,784.0 785.0,784.0"/>
<path d="M1107.0,584.0 C1107.0,584.0 1093.1,591.2 1085.5,595.0 C1077.9,598.8 1069.1,603.2 1061.5,607.0 C1053.9,610.8 1045.9,614.4 1040.0,617.5 C1034.1,620.6 1027.8,622.9 1025.5,626.0 C1023.2,629.1 1025.8,633.2 1026.5,636.0 C1027.2,638.8 1029.5,642.5 1029.5,642.5"/>
<path d="M1309.5,576.5 C1309.5,576.5 1306.2,586.1 1304.0,592.5 C1301.8,598.9 1298.4,609.3 1295.5,617.0 C1292.6,624.7 1289.2,632.0 1286.5,638.5 C1283.8,645.0 1282.4,649.6 1279.0,656.0 C1275.6,662.4 1269.3,669.8 1266.0,677.0 C1262.7,684.2 1260.8,690.7 1259.0,699.0 C1257.2,707.3 1256.6,716.8 1255.0,727.0 C1253.4,737.2 1251.3,750.1 1249.5,760.0 C1247.7,769.9 1245.5,778.5 1244.0,786.5 C1242.5,794.5 1240.5,808.0 1240.5,808.0"/>
</g>
<!-- tracks -->
<g fill="none" stroke="#a8852f" stroke-width="2.5" stroke-dasharray="4.5 9" stroke-linecap="butt">
<path d="M1207.0,479.0 C1207.0,479.0 1199.5,489.1 1196.0,494.0 C1192.5,498.9 1189.2,503.9 1186.0,508.5 C1182.8,513.1 1180.7,517.5 1177.0,521.5 C1173.3,525.5 1169.0,527.9 1164.0,532.5 C1159.0,537.1 1148.2,548.0 1140.0,555.5 C1131.8,563.0 1119.7,573.0 1115.0,577.5 C1110.3,582.0 1108.2,585.8 1104.0,589.5 C1099.8,593.2 1093.8,596.2 1089.5,600.0 C1085.2,603.8 1081.8,608.8 1078.0,612.5 C1074.2,616.2 1071.1,618.9 1067.0,622.5 C1062.9,626.1 1056.5,629.5 1053.5,634.0 C1050.5,638.5 1048.5,644.5 1049.0,649.5 C1049.5,654.5 1053.8,658.9 1056.5,664.0 C1059.2,669.1 1061.7,674.6 1065.0,680.0 C1068.3,685.4 1073.5,689.8 1076.5,696.5 C1079.5,703.2 1080.4,713.9 1083.0,720.5 C1085.6,727.1 1087.9,730.1 1092.0,736.0 C1096.1,741.9 1108.7,758.6 1114.0,764.5 C1119.3,770.4 1124.7,771.7 1129.0,777.5 C1133.3,783.3 1136.3,792.2 1140.0,799.5 C1143.7,806.8 1148.1,814.4 1151.0,821.5 C1153.9,828.6 1157.5,842.0 1157.5,842.0"/>
<path d="M1177.0,521.5 C1177.0,521.5 1188.7,520.7 1194.5,520.5 C1200.3,520.3 1206.3,519.8 1212.0,520.5 C1217.7,521.2 1223.2,522.7 1228.5,524.5 C1233.8,526.3 1238.9,529.1 1244.0,531.5 C1249.1,533.9 1254.2,536.1 1259.0,539.0 C1263.8,541.9 1268.1,545.7 1272.5,549.0 C1276.9,552.3 1280.8,555.9 1285.5,559.0 C1290.2,562.1 1298.1,566.0 1301.0,567.5 C1303.9,569.0 1308.5,571.0 1308.5,571.0"/>
<path d="M1295.5,583.0 C1295.5,583.0 1288.2,592.4 1284.5,595.0 C1280.8,597.6 1277.8,596.7 1273.5,598.5 C1269.2,600.3 1262.8,603.2 1258.0,606.0 C1253.2,608.8 1249.3,612.1 1245.0,615.5 C1240.7,618.9 1236.3,623.0 1232.0,626.5 C1227.7,630.0 1223.8,633.4 1219.0,636.5 C1214.2,639.6 1208.2,641.8 1203.5,645.0 C1198.8,648.2 1194.5,652.3 1190.5,656.0 C1186.5,659.7 1183.9,663.5 1179.5,667.0 C1175.1,670.5 1168.8,673.2 1164.0,677.0 C1159.2,680.8 1155.0,685.8 1151.0,690.0 C1147.0,694.2 1143.2,698.0 1140.0,702.0 C1136.8,706.0 1134.4,709.8 1131.5,714.0 C1128.6,718.2 1125.1,722.2 1122.5,727.0 C1119.9,731.8 1116.0,737.3 1116.0,742.5 C1116.0,747.7 1120.3,752.8 1122.5,758.0 C1124.7,763.2 1129.0,774.0 1129.0,774.0"/>
<path d="M1284.5,595.0 C1284.5,595.0 1281.0,606.2 1279.0,611.5 C1277.0,616.8 1275.2,621.6 1272.5,626.5 C1269.8,631.4 1265.6,636.2 1262.5,641.0 C1259.4,645.8 1257.2,650.1 1254.0,655.0 C1250.8,659.9 1246.3,665.4 1243.0,670.5 C1239.7,675.6 1236.8,680.8 1234.0,685.5 C1231.2,690.2 1228.5,694.2 1226.5,699.0 C1224.5,703.8 1222.8,708.6 1222.0,714.0 C1221.2,719.4 1221.8,726.0 1222.0,731.5 C1222.2,737.0 1222.2,741.5 1223.0,747.0 C1223.8,752.5 1225.4,759.1 1226.5,764.5 C1227.6,769.9 1227.7,774.4 1229.5,779.5 C1231.3,784.6 1235.7,789.8 1237.5,795.0 C1239.3,800.2 1240.5,810.5 1240.5,810.5"/>
<path d="M1025.5,641.5 C1025.5,641.5 1033.2,648.6 1036.0,653.0 C1038.8,657.4 1039.2,663.6 1042.5,668.0 C1045.8,672.4 1051.5,674.0 1056.0,679.5 C1060.5,685.0 1065.3,694.1 1070.0,702.0 C1074.7,709.9 1080.0,718.1 1084.0,727.0 C1088.0,735.9 1090.8,745.6 1094.0,755.5 C1097.2,765.4 1100.4,775.5 1103.0,786.5 C1105.6,797.5 1107.7,813.2 1109.5,821.5 C1111.3,829.8 1115.0,842.0 1115.0,842.0"/>
<path stroke-dasharray="8 4 3 4" d="M887.0,696.5 C887.0,696.5 895.8,696.2 901.5,697.0 C907.2,697.8 914.2,699.8 921.0,701.0 C927.8,702.2 936.3,702.2 942.5,704.0 C948.7,705.8 953.0,707.1 958.0,712.0 C963.0,716.9 967.6,725.7 973.0,734.0 C978.4,742.3 985.8,753.3 990.5,762.0 C995.2,770.7 998.6,776.8 1001.5,786.0 C1004.4,795.2 1005.1,807.7 1008.0,817.0 C1010.9,826.3 1019.0,842.0 1019.0,842.0"/>
<path d="M1000.0,779.5 C1000.0,779.5 1003.6,797.6 1006.5,808.0 C1009.4,818.4 1017.5,842.0 1017.5,842.0"/>
<path stroke-dasharray="6 4.5" d="M872.5,818.0 C872.5,818.0 883.8,820.9 890.0,823.5 C896.2,826.1 901.2,830.6 909.5,833.5 C917.8,836.4 942.5,842.0 942.5,842.0"/>
<path stroke-dasharray="8 4.5" d="M707.5,683.5 C707.5,683.5 714.7,699.8 717.0,707.5 C719.3,715.2 720.9,722.6 721.5,729.5 C722.1,736.4 721.8,744.5 720.5,749.0 C719.2,753.5 713.0,758.0 713.0,758.0"/>
<path stroke-dasharray="8 4.5" d="M737.0,781.0 C737.0,781.0 730.2,790.8 726.0,795.0 C721.8,799.2 711.5,806.0 711.5,806.0"/>
<path stroke-dasharray="8 4.5" d="M612.5,591.5 C612.5,591.5 631.4,590.5 635.5,591.5 C639.6,592.5 641.1,595.2 643.0,599.0 C644.9,602.8 646.7,613.3 650.5,621.0 C654.3,628.7 663.9,640.2 666.0,645.0 C668.1,649.8 666.9,652.8 667.0,658.0 C667.1,663.2 667.0,740.0 667.0,740.0"/>
<path stroke-dasharray="8 4.5" d="M0.0,788.5 L55.0,751.5" stroke-width="2.2"/>
</g>
<!-- admin boundary -->
<g fill="none" stroke="#ab97b6" stroke-linecap="butt">
<path d="M659.5,470.0 C659.5,470.0 661.5,497.8 664.0,512.0 C666.5,526.2 669.3,540.8 674.5,555.5 C679.7,570.2 692.5,595.1 695.0,600.0 C697.5,604.9 698.4,607.8 702.5,611.5 C706.6,615.2 721.1,626.2 731.5,632.5 C741.9,638.8 755.3,644.9 765.0,649.0 C774.7,653.1 781.6,655.2 790.0,657.0 C798.4,658.8 807.1,659.5 815.5,660.0 C823.9,660.5 832.2,660.8 840.5,660.0 C848.8,659.2 857.2,657.2 865.5,655.0 C873.8,652.8 880.6,651.3 890.0,647.0 C899.4,642.7 911.5,636.2 922.0,629.0 C932.5,621.8 943.5,612.7 953.0,604.0 C962.5,595.3 972.8,584.1 979.0,577.0 C985.2,569.9 987.1,565.3 993.0,558.0 C998.9,550.7 1012.6,535.3 1021.5,524.5 C1030.4,513.7 1039.2,502.1 1046.5,493.0 C1053.8,483.9 1065.5,470.0 1065.5,470.0" stroke-width="2.3" stroke-dasharray="13 3.5 2.2 3.5 2.2 3.5" opacity=".9"/>
<path d="M1335,610 L1328,612.5 L1328,625.5 L1326,636.5 L1313,655 L1300,679 L1335,712 L1326,727 L1330.5,749 L1262.5,823.5 L1229.5,842" stroke="#c2a9c9" stroke-width="5.5" opacity=".6"/>
<path d="M1335,610 L1328,612.5 L1328,625.5 L1326,636.5 L1313,655 L1300,679 L1335,712 L1326,727 L1330.5,749 L1262.5,823.5 L1229.5,842" stroke="#9f86ab" stroke-width="1.7" stroke-dasharray="9 3 2 3"/>
</g>
<!-- wetland -->
<g stroke="#55aaf0" stroke-width="1.3">
<path d="M1275,682.5h9 M1243,689h12 M1263,689h12 M1239,696h4 M1263,697.5h12 M1283,697.5h5 M1246,702.5h12 M1280,706h10 M1234,711h7 M1244,713h12 M1263,711h12 M1283,719.5h8 M1243,723h10 M1263,721h12 M1240,730h4 M1266,730h7 M1283,730h9 M1236,740h6 M1273,738h12 M1271,745h12 M1278,751.5h12 M1278,760h12"/>
</g>
<!-- markers -->
<g fill="none" stroke="#17751b" stroke-width="1.7">
<circle cx="682" cy="705" r="5.3"/><circle cx="678" cy="717" r="5.3"/><circle cx="674" cy="741" r="5.3"/>
</g>
<g fill="#9dc08f"><circle cx="682" cy="705" r="1.6"/><circle cx="678" cy="717" r="1.6"/><circle cx="674" cy="741" r="1.3"/></g>
<!-- labels -->
<defs>
<path d="M659.0,574.5 C659.0,574.5 660.3,581.4 661.9,584.9 C663.5,588.4 666.2,591.0 668.8,595.2 C671.4,599.4 678.8,613.9 683.3,620.0 C687.8,626.1 691.0,628.5 697.0,633.2 C703.0,637.9 713.6,644.8 722.0,650.0 C730.4,655.2 743.3,662.2 747.2,664.4 C751.1,666.6 757.0,669.5 757.0,669.5" id="pg"/>
</defs>
<g style="paint-order:stroke" stroke="#ffffff" stroke-opacity=".85" stroke-width="2.2" stroke-linejoin="round" fill="#2a2a2a" font-size="13.5">
<text x="246.5" y="514" font-size="23.5" fill="#767676" stroke-width="3" textLength="127" lengthAdjust="spacingAndGlyphs">Kamieńczyk</text>
<text x="23" y="574" font-size="18" fill="#8b8b8b" stroke-width="2.6" textLength="112.5" lengthAdjust="spacingAndGlyphs">Piaski Drugie</text>
<text x="114" y="724.5" font-size="18" fill="#8b8b8b" stroke-width="2.6" textLength="130" lengthAdjust="spacingAndGlyphs">Piaski Pierwsze</text>
<text x="635.5" y="835.5" font-size="17" fill="#8b8b8b" stroke-width="2.6" textLength="53" lengthAdjust="spacingAndGlyphs">Błonie</text>
<text x="710.5" y="846" font-size="15" fill="#8b8b8b" font-style="italic" stroke-width="2.4" textLength="54" lengthAdjust="spacingAndGlyphs">Błonie</text>
<text transform="translate(145.5,498.5) rotate(-27.6)" text-anchor="middle" textLength="104" lengthAdjust="spacingAndGlyphs">Marszałka Józefa</text>
<text transform="translate(190,561.5) rotate(-10.5)" text-anchor="middle" textLength="76" lengthAdjust="spacingAndGlyphs">Mazowiecka</text>
<text transform="translate(181.5,606.5) rotate(-21.5)" text-anchor="middle" textLength="59" lengthAdjust="spacingAndGlyphs">Spokojna</text>
<text transform="translate(167,680) rotate(-20)" text-anchor="middle" textLength="37" lengthAdjust="spacingAndGlyphs">Piaski</text>
<text transform="translate(428.5,484.5) rotate(2.5)" text-anchor="middle" textLength="90" lengthAdjust="spacingAndGlyphs">Armii Krajowej</text>
<text transform="translate(339.5,538) rotate(-2.3)" font-size="14.5" textLength="85" lengthAdjust="spacingAndGlyphs">Mazowiecka</text>
<text transform="translate(549.5,536) rotate(2.2)" text-anchor="middle" textLength="75.5" lengthAdjust="spacingAndGlyphs">Mazowiecka</text>
<text transform="translate(484,522) rotate(-90)" textLength="92" lengthAdjust="spacingAndGlyphs">Wojska Polskiego</text>
<text transform="translate(471,635) rotate(-90)" text-anchor="middle" textLength="66" lengthAdjust="spacingAndGlyphs">Jaśminowa</text>
<text transform="translate(360,634) rotate(-51.5)" text-anchor="middle" textLength="101" lengthAdjust="spacingAndGlyphs">Jana Kilińskiego</text>
<text transform="translate(428,625) rotate(8)" text-anchor="middle" textLength="62" lengthAdjust="spacingAndGlyphs">Chabrowa</text>
<text transform="translate(558,643) rotate(46.5)" text-anchor="middle" textLength="66" lengthAdjust="spacingAndGlyphs">Jadowska</text>
<text transform="translate(350.5,697) rotate(-53)" text-anchor="middle" textLength="46" lengthAdjust="spacingAndGlyphs">Różana</text>
<text transform="translate(413.5,673) rotate(-90)" text-anchor="middle" textLength="45" lengthAdjust="spacingAndGlyphs">Różana</text>
<text x="437.5" y="745" textLength="52.5" lengthAdjust="spacingAndGlyphs">Makowa</text>
<text transform="translate(652,777) rotate(-90)" text-anchor="middle" textLength="59" lengthAdjust="spacingAndGlyphs">Chmielna</text>
<text transform="translate(880,494) rotate(33)" text-anchor="middle" textLength="60" lengthAdjust="spacingAndGlyphs">Kwiatowa</text>
<text transform="translate(717,768.5) rotate(19.5)" text-anchor="middle" textLength="41" lengthAdjust="spacingAndGlyphs">3 Maja</text>
<text transform="translate(824,806) rotate(19.5)" text-anchor="middle" textLength="41" lengthAdjust="spacingAndGlyphs">3 Maja</text>
<text transform="translate(453,796.5) rotate(-90)" text-anchor="end" textLength="70" lengthAdjust="spacingAndGlyphs">Lawendowa</text>
<text transform="translate(288.7,787.5) rotate(-90)" text-anchor="end" font-size="17" textLength="98" lengthAdjust="spacingAndGlyphs">Warszawska</text>
<text transform="translate(655.5,489.5) rotate(93)" font-size="17" fill="#5e86bd" stroke="#c4e0ea" stroke-opacity=".7" stroke-width="1.6" textLength="33" lengthAdjust="spacingAndGlyphs">Bug</text>
<text font-size="15" fill="#8f7399" stroke="#e8e4ec" stroke-opacity=".55" stroke-width="2"><textPath href="#pg" startOffset="8" textLength="128" lengthAdjust="spacingAndGlyphs">gmina Wyszków</textPath></text>
<text transform="translate(1266.5,804) rotate(-43)" text-anchor="middle" font-size="15.5" fill="#8f7399" stroke="#f2efe9" stroke-opacity=".6" stroke-width="2" textLength="68" lengthAdjust="spacingAndGlyphs">Wyszków</text>
</g>
</g>
<!-- attribution -->
<rect x="1189" y="825.5" width="146" height="16.5" fill="#fff" fill-opacity=".72"/>
<text x="1193" y="838" font-size="10.5" fill="#222" textLength="8.5" lengthAdjust="spacingAndGlyphs">©</text>
<text x="1204.5" y="838" font-size="10.5" fill="#111" textLength="126" lengthAdjust="spacingAndGlyphs" text-decoration="underline">OpenStreetMap contributors</text>
<!-- controls -->
<path d="M28,493 V534" stroke="#9b9b9b" stroke-width="1.3" fill="none"/>
<path d="M28,534 V592.5" stroke="#6f8a66" stroke-width="1.6" fill="none"/>
<rect x="16.5" y="531" width="23.5" height="6.6" rx="3.3" fill="#6f8a66"/>
<g fill="#fff" fill-opacity=".10" stroke="#9c9c9c" stroke-width="1.3">
<circle cx="28" cy="622.6" r="19.8"/>
<circle cx="28" cy="666.5" r="19.8" stroke="#c4c4c4"/>
<circle cx="28" cy="710.9" r="19.8"/>
<circle cx="28" cy="755" r="19.8"/>
</g>
<circle cx="49.8" cy="600.5" r="8.8" fill="#6f8a66"/><circle cx="49.8" cy="644.6" r="8.8" fill="#6f8a66"/>
<g font-size="10.5" font-weight="bold" fill="#fff" text-anchor="middle"><text x="49.8" y="604.3">4</text><text x="49.8" y="648.4">0</text></g>
<!-- icon: house on network -->
<g fill="none" stroke="#000" stroke-width="1.2">
<path d="M23.9,620 L28,615.9 L32.1,620 M25.2,619.4 V623 H30.8 V619.4 M28,623 V628.5"/>
<path d="M20.3,629 H35.6" stroke-width="1.5"/>
</g>
<rect x="26.2" y="627.3" width="3.6" height="3.2" fill="#000"/>
<!-- icon: home -->
<path d="M20.4,711.4 L28,703.8 L31.6,707.4 V705 H34.2 V710 L35.6,711.4 L34.5,712.5 L33.6,711.6 V718 H22.4 V711.6 L21.5,712.5 Z" fill="#000"/>
<path d="M24.2,711 L28,707.2 L31.8,711 V716.4 H24.2 Z" fill="#fff" fill-opacity=".0"/>
<rect x="26.6" y="713.4" width="3" height="4.7" fill="#dfe8da"/>
<!-- icon: line -->
<path d="M20.3,760.5 L35.4,748.6" stroke="#000" stroke-width="1.2" fill="none"/>
<path d="M20.3,761.5 v-2" stroke="#000" stroke-width="1" fill="none"/>
</svg>


<!-- text + callout overlay -->
<svg class="abs" style="left:0;top:0" width="1600" height="870" viewBox="0 0 1600 870" font-family="Liberation Sans, sans-serif">
<defs><filter id="sh" x="-10%" y="-10%" width="125%" height="130%"><feGaussianBlur in="SourceAlpha" stdDeviation="2.4"/><feOffset dx="1.2" dy="1.6"/><feComponentTransfer><feFuncA type="linear" slope=".75"/></feComponentTransfer><feMerge><feMergeNode/><feMergeNode in="SourceGraphic"/></feMerge></filter></defs>
<text x="7.00" y="21" font-size="14" fill="#eef2ec" textLength="146.70" lengthAdjust="spacingAndGlyphs">SIDUSIS COVERAGE 2</text>
<text x="27.00" y="48" font-size="12" fill="#fff" textLength="34.02" lengthAdjust="spacingAndGlyphs">FILTRY</text>
<text x="9.00" y="78" font-size="12.5" fill="#fff" textLength="43.71" lengthAdjust="spacingAndGlyphs">POWIAT</text>
<text x="333.00" y="78" font-size="12.5" fill="#fff" textLength="38.01" lengthAdjust="spacingAndGlyphs">GMINA</text>
<text x="652.00" y="78" font-size="12.5" fill="#fff" textLength="79.69" lengthAdjust="spacingAndGlyphs">MIEJSCOWOŚĆ</text>
<text x="1012.00" y="78" font-size="12.5" fill="#fff" textLength="31.73" lengthAdjust="spacingAndGlyphs">ULICA</text>
<text x="747.00" y="80" font-size="12" fill="#000" textLength="61.69" lengthAdjust="spacingAndGlyphs">Kamieńczyk</text>
<text x="1470.00" y="80" font-size="10.5" fill="#111" font-weight="bold" textLength="118.10" lengthAdjust="spacingAndGlyphs">USUŃ WSZYSTKIE FILTRY</text>
<text x="1089.60" y="20" font-size="12" fill="#c9d5c5" textLength="57.99" lengthAdjust="spacingAndGlyphs">OPERATOR</text>
<text x="1192.00" y="20" font-size="12" fill="#c9d5c5" textLength="130.10" lengthAdjust="spacingAndGlyphs">PODZIAŁ TERYTORIALNY</text>
<text x="1368.40" y="20" font-size="12" fill="#c9d5c5" textLength="83.20" lengthAdjust="spacingAndGlyphs">KONFIGURACJA</text>
<text x="8.00" y="118" font-size="17" fill="#cbd0c9" textLength="120.20" lengthAdjust="spacingAndGlyphs">REFERENCYJNE</text>
<text x="141.40" y="118" font-size="17" fill="#96a592" textLength="63.40" lengthAdjust="spacingAndGlyphs">SIDUSIS</text>
<text x="216.00" y="118" font-size="17" fill="#cbd0c9" textLength="92.20" lengthAdjust="spacingAndGlyphs">BRAKUJACE</text>
<text x="1221.00" y="118" font-size="17" fill="#cbd0c9" textLength="106.21" lengthAdjust="spacingAndGlyphs">INFORMACJE</text>
<text x="41.60" y="152" font-size="10.5" fill="#0c0c0c" font-weight="bold" textLength="40.99" lengthAdjust="spacingAndGlyphs">POBIERZ</text>
<text x="100.40" y="152" font-size="10.5" fill="#0c0c0c" font-weight="bold" textLength="33.42" lengthAdjust="spacingAndGlyphs">WYŚLIJ</text>
<text x="151.00" y="152" font-size="10.5" fill="#bdbdbd" font-weight="bold" textLength="27.19" lengthAdjust="spacingAndGlyphs">USUŃ</text>
<text x="197.40" y="152" font-size="10.5" fill="#0c0c0c" font-weight="bold" textLength="113.43" lengthAdjust="spacingAndGlyphs">ZMIANA PARAMETRÓW</text>
<text x="348.00" y="152" font-size="10.5" fill="#0c0c0c" font-weight="bold" textLength="34.42" lengthAdjust="spacingAndGlyphs">WIDOK</text>
<text x="957.00" y="152" font-size="10.5" fill="#0c0c0c" font-weight="bold" textLength="50.20" lengthAdjust="spacingAndGlyphs">IMPORTUJ</text>
<text x="1025.00" y="152" font-size="10.5" fill="#0c0c0c" font-weight="bold" textLength="54.20" lengthAdjust="spacingAndGlyphs">EKSPORTUJ</text>
<text x="1098.00" y="152" font-size="10.5" fill="#0c0c0c" font-weight="bold" textLength="129.20" lengthAdjust="spacingAndGlyphs">USUWANIE ZASIĘGÓW CSV</text>
<text x="1258.00" y="152" font-size="10.5" fill="#0c0c0c" font-weight="bold" textLength="68.20" lengthAdjust="spacingAndGlyphs">USUŃ SIDUSIS</text>
<text x="41.00" y="188" font-size="12" fill="#a3aea0" textLength="12.20" lengthAdjust="spacingAndGlyphs">ID</text>
<text x="81.00" y="188" font-size="12" fill="#a3aea0" textLength="80.20" lengthAdjust="spacingAndGlyphs">MIEJSCOWOŚĆ</text>
<text x="227.00" y="188" font-size="12" fill="#a3aea0" textLength="31.02" lengthAdjust="spacingAndGlyphs">ULICA</text>
<text x="324.40" y="188" font-size="12" fill="#a3aea0" textLength="41.40" lengthAdjust="spacingAndGlyphs">NUMER</text>
<text x="388.00" y="188" font-size="12" fill="#a3aea0" textLength="64.39" lengthAdjust="spacingAndGlyphs">SZEROKOŚĆ</text>
<text x="476.00" y="188" font-size="12" fill="#a3aea0" textLength="52.69" lengthAdjust="spacingAndGlyphs">DŁUGOŚĆ</text>
<text x="563.40" y="188" font-size="12" fill="#a3aea0" textLength="47.40" lengthAdjust="spacingAndGlyphs">MEDIUM</text>
<text x="644.80" y="188" font-size="12" fill="#a3aea0" textLength="78.21" lengthAdjust="spacingAndGlyphs">TECHNOLOGIA</text>
<text x="747.40" y="188" font-size="12" fill="#a3aea0" textLength="37.20" lengthAdjust="spacingAndGlyphs">DOWN</text>
<text x="808.00" y="188" font-size="12" fill="#a3aea0" textLength="13.60" lengthAdjust="spacingAndGlyphs">UP</text>
<text x="845.60" y="188" font-size="12" fill="#a3aea0" textLength="43.24" lengthAdjust="spacingAndGlyphs">ZASIĘG?</text>
<text x="913.00" y="188" font-size="12" fill="#a3aea0" textLength="7.55" lengthAdjust="spacingAndGlyphs">H</text>
<text x="953.00" y="188" font-size="12" fill="#a3aea0" textLength="7.78" lengthAdjust="spacingAndGlyphs">D</text>
<text x="991.00" y="188" font-size="12" fill="#a3aea0" textLength="57.20" lengthAdjust="spacingAndGlyphs">OPERATOR</text>
<text x="1070.40" y="188" font-size="12" fill="#a3aea0" textLength="106.20" lengthAdjust="spacingAndGlyphs">DATA AKTUALIZACJI</text>
<text x="1190.20" y="188" font-size="12" fill="#a3aea0" textLength="106.20" lengthAdjust="spacingAndGlyphs">DATA UTWORZENIA</text>
<text x="32.00" y="214" font-size="12" fill="#000" textLength="26.19" lengthAdjust="spacingAndGlyphs">FUZ1</text>
<text x="75.60" y="214" font-size="12" fill="#000" textLength="61.01" lengthAdjust="spacingAndGlyphs">Kamieńczyk</text>
<text x="179.40" y="214" font-size="12" fill="#000" textLength="127.41" lengthAdjust="spacingAndGlyphs">al. Prymasa Jana Wężyka</text>
<text x="319.60" y="214" font-size="12" fill="#000" textLength="5.77" lengthAdjust="spacingAndGlyphs">5</text>
<text x="410.80" y="214" font-size="12" fill="#000" textLength="53.39" lengthAdjust="spacingAndGlyphs">52.583334</text>
<text x="487.60" y="214" font-size="12" fill="#000" textLength="53.80" lengthAdjust="spacingAndGlyphs">21.550780</text>
<text x="547.20" y="214" font-size="12" fill="#000" textLength="81.20" lengthAdjust="spacingAndGlyphs">światłowodowe</text>
<text x="639.20" y="214" font-size="12" fill="#000" textLength="32.79" lengthAdjust="spacingAndGlyphs">GPON</text>
<text x="742.00" y="214" font-size="12" fill="#000" textLength="24.31" lengthAdjust="spacingAndGlyphs">1000</text>
<text x="802.20" y="214" font-size="12" fill="#000" textLength="25.63" lengthAdjust="spacingAndGlyphs">2000</text>
<text x="978.20" y="214" font-size="12" fill="#000" textLength="75.20" lengthAdjust="spacingAndGlyphs">HANDLOWIEC</text>
<text x="1064.80" y="214" font-size="12" fill="#000" textLength="109.21" lengthAdjust="spacingAndGlyphs">2023-02-09 06:46:19</text>
<text x="1186.00" y="214" font-size="12" fill="#000" textLength="108.20" lengthAdjust="spacingAndGlyphs">2023-02-09 06:46:19</text>
<text x="32.00" y="240" font-size="12" fill="#000" textLength="26.19" lengthAdjust="spacingAndGlyphs">FUZ2</text>
<text x="75.60" y="240" font-size="12" fill="#000" textLength="61.01" lengthAdjust="spacingAndGlyphs">Kamieńczyk</text>
<text x="179.40" y="240" font-size="12" fill="#000" textLength="51.61" lengthAdjust="spacingAndGlyphs">ul. 3 Maja</text>
<text x="319.60" y="240" font-size="12" fill="#000" textLength="4.62" lengthAdjust="spacingAndGlyphs">1</text>
<text x="410.80" y="240" font-size="12" fill="#000" textLength="54.40" lengthAdjust="spacingAndGlyphs">52.599528</text>
<text x="487.60" y="240" font-size="12" fill="#000" textLength="53.80" lengthAdjust="spacingAndGlyphs">21.550748</text>
<text x="547.20" y="240" font-size="12" fill="#000" textLength="81.20" lengthAdjust="spacingAndGlyphs">światłowodowe</text>
<text x="639.20" y="240" font-size="12" fill="#000" textLength="32.79" lengthAdjust="spacingAndGlyphs">GPON</text>
<text x="742.00" y="240" font-size="12" fill="#000" textLength="24.31" lengthAdjust="spacingAndGlyphs">1000</text>
<text x="802.20" y="240" font-size="12" fill="#000" textLength="25.63" lengthAdjust="spacingAndGlyphs">2000</text>
<text x="978.20" y="240" font-size="12" fill="#000" textLength="75.20" lengthAdjust="spacingAndGlyphs">HANDLOWIEC</text>
<text x="1064.80" y="240" font-size="12" fill="#000" textLength="109.21" lengthAdjust="spacingAndGlyphs">2023-02-09 06:46:28</text>
<text x="1186.00" y="240" font-size="12" fill="#000" textLength="108.20" lengthAdjust="spacingAndGlyphs">2023-02-09 06:46:28</text>
<text x="32.00" y="266" font-size="12" fill="#000" textLength="26.19" lengthAdjust="spacingAndGlyphs">FUZ3</text>
<text x="75.60" y="266" font-size="12" fill="#000" textLength="61.01" lengthAdjust="spacingAndGlyphs">Kamieńczyk</text>
<text x="179.40" y="266" font-size="12" fill="#000" textLength="51.61" lengthAdjust="spacingAndGlyphs">ul. 3 Maja</text>
<text x="318.60" y="266" font-size="12" fill="#000" textLength="11.60" lengthAdjust="spacingAndGlyphs">1a</text>
<text x="410.80" y="266" font-size="12" fill="#000" textLength="54.40" lengthAdjust="spacingAndGlyphs">52.599899</text>
<text x="487.60" y="266" font-size="12" fill="#000" textLength="53.80" lengthAdjust="spacingAndGlyphs">21.550830</text>
<text x="547.20" y="266" font-size="12" fill="#000" textLength="81.20" lengthAdjust="spacingAndGlyphs">światłowodowe</text>
<text x="639.20" y="266" font-size="12" fill="#000" textLength="32.79" lengthAdjust="spacingAndGlyphs">GPON</text>
<text x="742.00" y="266" font-size="12" fill="#000" textLength="24.31" lengthAdjust="spacingAndGlyphs">1000</text>
<text x="802.20" y="266" font-size="12" fill="#000" textLength="25.63" lengthAdjust="spacingAndGlyphs">2000</text>
<text x="978.20" y="266" font-size="12" fill="#000" textLength="75.20" lengthAdjust="spacingAndGlyphs">HANDLOWIEC</text>
<text x="1064.80" y="266" font-size="12" fill="#000" textLength="109.21" lengthAdjust="spacingAndGlyphs">2023-02-09 06:46:36</text>
<text x="1186.00" y="266" font-size="12" fill="#000" textLength="108.20" lengthAdjust="spacingAndGlyphs">2023-02-09 06:46:36</text>
<text x="32.00" y="292" font-size="12" fill="#000" textLength="26.19" lengthAdjust="spacingAndGlyphs">FUZ4</text>
<text x="75.60" y="292" font-size="12" fill="#000" textLength="61.01" lengthAdjust="spacingAndGlyphs">Kamieńczyk</text>
<text x="179.40" y="292" font-size="12" fill="#000" textLength="51.61" lengthAdjust="spacingAndGlyphs">ul. 3 Maja</text>
<text x="318.60" y="292" font-size="12" fill="#000" textLength="12.96" lengthAdjust="spacingAndGlyphs">1b</text>
<text x="410.80" y="292" font-size="12" fill="#000" textLength="54.40" lengthAdjust="spacingAndGlyphs">52.600083</text>
<text x="487.60" y="292" font-size="12" fill="#000" textLength="53.80" lengthAdjust="spacingAndGlyphs">21.550951</text>
<text x="547.20" y="292" font-size="12" fill="#000" textLength="81.20" lengthAdjust="spacingAndGlyphs">światłowodowe</text>
<text x="639.20" y="292" font-size="12" fill="#000" textLength="32.79" lengthAdjust="spacingAndGlyphs">GPON</text>
<text x="742.00" y="292" font-size="12" fill="#000" textLength="24.31" lengthAdjust="spacingAndGlyphs">1000</text>
<text x="802.20" y="292" font-size="12" fill="#000" textLength="25.63" lengthAdjust="spacingAndGlyphs">2000</text>
<text x="978.20" y="292" font-size="12" fill="#000" textLength="75.20" lengthAdjust="spacingAndGlyphs">HANDLOWIEC</text>
<text x="1064.80" y="292" font-size="12" fill="#000" textLength="108.20" lengthAdjust="spacingAndGlyphs">2023-02-09 06:46:44</text>
<text x="1186.00" y="292" font-size="12" fill="#000" textLength="108.20" lengthAdjust="spacingAndGlyphs">2023-02-09 06:46:44</text>
<text x="1370.20" y="129" font-size="18" fill="#000" font-weight="bold" textLength="179.80" lengthAdjust="spacingAndGlyphs">PARAMETRY SIDUSIS</text>
<text x="1370.60" y="183" font-size="13" fill="#000" font-weight="bold" textLength="202.20" lengthAdjust="spacingAndGlyphs">WYBIERZ MEDIUM TRANSMISYJNE:</text>
<text x="1374.60" y="203" font-size="12" fill="#111" textLength="82.29" lengthAdjust="spacingAndGlyphs">światłowodowe</text>
<text x="1370.60" y="229" font-size="13" fill="#000" font-weight="bold" textLength="140.00" lengthAdjust="spacingAndGlyphs">WYBIERZ TECHNOLOGIE:</text>
<text x="1374.60" y="248" font-size="12" fill="#111" textLength="33.40" lengthAdjust="spacingAndGlyphs">GPON</text>
<text x="1369.60" y="274" font-size="13" fill="#000" font-weight="bold" textLength="69.80" lengthAdjust="spacingAndGlyphs">DOWNLINK:</text>
<text x="1373.60" y="293" font-size="12" fill="#111" textLength="24.60" lengthAdjust="spacingAndGlyphs">1000</text>
<text x="1369.60" y="319" font-size="13" fill="#000" font-weight="bold" textLength="47.20" lengthAdjust="spacingAndGlyphs">UPLINK:</text>
<text x="1374.60" y="338" font-size="12" fill="#111" textLength="24.60" lengthAdjust="spacingAndGlyphs">2000</text>
<text x="1370.60" y="364" font-size="13" fill="#000" font-weight="bold" textLength="133.20" lengthAdjust="spacingAndGlyphs">WYBIERZ TYP ZASIĘGU:</text>
<text x="1373.60" y="383" font-size="12" fill="#111" textLength="58.60" lengthAdjust="spacingAndGlyphs">rzeczywisty</text>
<text x="1369.60" y="409" font-size="13" fill="#000" font-weight="bold" textLength="115.20" lengthAdjust="spacingAndGlyphs">USŁUGA HURTOWA:</text>
<text x="1374.60" y="428" font-size="12" fill="#111" textLength="19.43" lengthAdjust="spacingAndGlyphs">TAK</text>
<text x="1369.60" y="453" font-size="13" fill="#000" font-weight="bold" textLength="126.00" lengthAdjust="spacingAndGlyphs">USŁUGA DETALICZNA:</text>
<text x="1374.60" y="472" font-size="12" fill="#111" textLength="19.43" lengthAdjust="spacingAndGlyphs">TAK</text>
<text x="1370.60" y="498" font-size="13" fill="#000" font-weight="bold" textLength="65.10" lengthAdjust="spacingAndGlyphs">OPERATOR:</text>
<text x="1373.60" y="517" font-size="12" fill="#111" textLength="74.40" lengthAdjust="spacingAndGlyphs">HANDLOWIEC</text>
<text x="3.00" y="861" font-size="12" fill="#0e0e0e" textLength="82.69" lengthAdjust="spacingAndGlyphs">REFERENCYJNE:</text>
<text x="96.00" y="861" font-size="12" fill="#0e0e0e" font-weight="bold" textLength="20.19" lengthAdjust="spacingAndGlyphs">680</text>
<text x="122.00" y="861" font-size="12" fill="#0e0e0e" textLength="5.17" lengthAdjust="spacingAndGlyphs">z</text>
<text x="134.00" y="861" font-size="12" fill="#0e0e0e" font-weight="bold" textLength="20.19" lengthAdjust="spacingAndGlyphs">680</text>
<text x="165.00" y="861" font-size="12" fill="#0e0e0e" textLength="44.20" lengthAdjust="spacingAndGlyphs">SIDUSIS:</text>
<text x="217.00" y="861" font-size="12" fill="#0e0e0e" font-weight="bold" textLength="5.40" lengthAdjust="spacingAndGlyphs">4</text>
<text x="229.00" y="861" font-size="12" fill="#0e0e0e" textLength="5.17" lengthAdjust="spacingAndGlyphs">z</text>
<text x="241.00" y="861" font-size="12" fill="#0e0e0e" font-weight="bold" textLength="5.40" lengthAdjust="spacingAndGlyphs">4</text>
<text x="259.00" y="861" font-size="12" fill="#0e0e0e" textLength="110.45" lengthAdjust="spacingAndGlyphs">ADRESY-BRAKUJĄCE:</text>
<text x="376.00" y="861" font-size="12" fill="#0e0e0e" font-weight="bold" textLength="20.29" lengthAdjust="spacingAndGlyphs">676</text>
<text x="403.00" y="861" font-size="12" fill="#0e0e0e" textLength="5.17" lengthAdjust="spacingAndGlyphs">z</text>
<text x="414.00" y="861" font-size="12" fill="#0e0e0e" font-weight="bold" textLength="20.19" lengthAdjust="spacingAndGlyphs">676</text>
<text x="451.00" y="861" font-size="12" fill="#0e0e0e" textLength="136.45" lengthAdjust="spacingAndGlyphs">WIDOK REFERENCYJNYCH</text>
<text x="596.00" y="861" font-size="12" fill="#0e0e0e" font-weight="bold" textLength="63.96" lengthAdjust="spacingAndGlyphs">WSZYTSKIE</text>
<text x="667.00" y="861" font-size="12" fill="#0e0e0e" textLength="45.69" lengthAdjust="spacingAndGlyphs">ZASIĘGU</text>
<text x="720.00" y="861" font-size="12" fill="#0e0e0e" font-weight="bold" textLength="64.48" lengthAdjust="spacingAndGlyphs">WSZYTSKIE</text>
<text x="1274.00" y="861" font-size="12" fill="#0e0e0e" textLength="10.94" lengthAdjust="spacingAndGlyphs">DI</text>
<text x="1292.00" y="861" font-size="12" fill="#0e0e0e" textLength="19.46" lengthAdjust="spacingAndGlyphs">FUZ</text>
<text x="1318.00" y="861" font-size="12" fill="#0e0e0e" textLength="23.71" lengthAdjust="spacingAndGlyphs">RPT:</text>
<text x="1347.00" y="861" font-size="12" fill="#0e0e0e" textLength="17.94" lengthAdjust="spacingAndGlyphs">272</text>
<text x="1373.00" y="861" font-size="12" fill="#0e0e0e" textLength="52.69" lengthAdjust="spacingAndGlyphs">LICENCJA:</text>
<text x="1432.00" y="861" font-size="12" fill="#0e0e0e" textLength="47.71" lengthAdjust="spacingAndGlyphs">2-1-2024</text>
<text x="1507.00" y="861" font-size="12" fill="#0e0e0e" textLength="44.20" lengthAdjust="spacingAndGlyphs">WERSJA:</text>
<text x="1561.00" y="861" font-size="12" fill="#0e0e0e" textLength="33.19" lengthAdjust="spacingAndGlyphs">2.0.2.0</text>
<text transform="translate(1343,122.5) rotate(90)" font-size="13.5" fill="#f0f4ee" textLength="110.5" lengthAdjust="spacingAndGlyphs">PARAMETRY SIDUSIS</text>
<g fill="#fe0000" filter="url(#sh)">
<path d="M26.5,243 L120.5,288 L98,288 Z"/>
<rect x="39.5" y="287" width="238.5" height="64" rx="14"/>
<path d="M1185,259 L1156.5,337 L1133.5,337 Z"/>
<rect x="981.5" y="335.5" width="231.5" height="65.5" rx="14"/>
</g>
<text x="62.20" y="312" font-size="18.5" fill="#fff" textLength="193.21" lengthAdjust="spacingAndGlyphs">Nastąpiła zmiana ikonki</text>
<text x="62.80" y="332" font-size="18.5" fill="#fff" textLength="192.80" lengthAdjust="spacingAndGlyphs">statusu adresu zasięgu</text>
<text x="1012.80" y="362" font-size="18.5" fill="#fff" textLength="166.70" lengthAdjust="spacingAndGlyphs">Kolumny dat zostały</text>
<text x="1034.00" y="382" font-size="18.5" fill="#fff" textLength="123.50" lengthAdjust="spacingAndGlyphs">zaktualizowane</text>
</svg>
</body>
</html>
